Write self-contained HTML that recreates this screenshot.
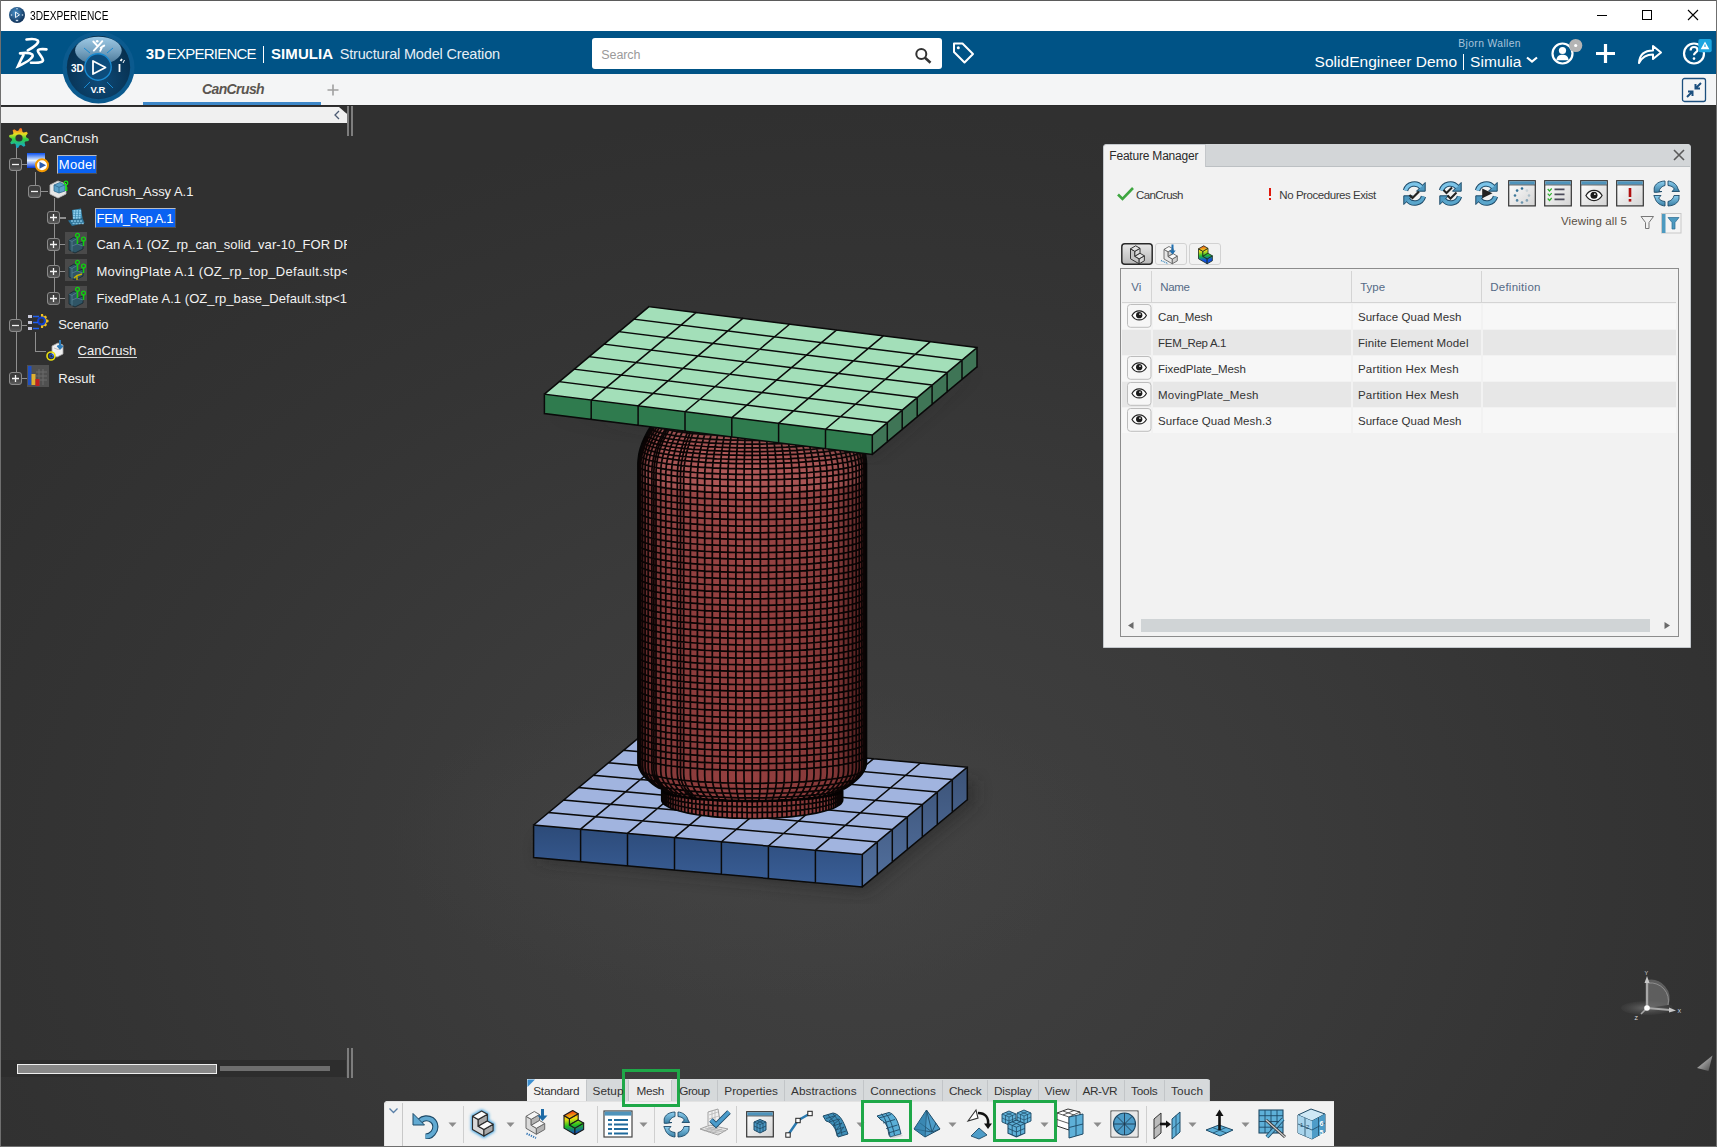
<!DOCTYPE html>
<html><head><meta charset="utf-8"><style>
html,body{margin:0;padding:0}
body{width:1717px;height:1147px;position:relative;overflow:hidden;background:#333333;font-family:"Liberation Sans",sans-serif}
.b{position:absolute;display:block}
.t{position:absolute;white-space:pre;line-height:1}
</style></head><body>
<div class="b" style="left:0px;top:0px;width:1717px;height:31px;background:#fff"></div>
<div class="b" style="left:0px;top:0px;width:1717px;height:1px;background:#5b5b5b"></div>
<div class="b" style="left:1px;top:31px;width:1715px;height:43px;background:#005386"></div>
<div class="b" style="left:1px;top:74px;width:1715px;height:31px;background:#f4f5f6"></div>
<div class="b" style="left:1px;top:105px;width:1715px;height:1px;background:#2a2a2a"></div>
<div class="b" style="left:1px;top:106px;width:1715px;height:1041px;background:radial-gradient(ellipse 1000px 760px at 860px 760px,#414141 0%,#3b3b3b 40%,#343434 75%,#303030 100%)"></div>
<svg class="b" style="left:0;top:0" width="1717" height="1147" viewBox="0 0 1717 1147">
<defs><radialGradient id="bgg" cx="0.5" cy="0.5" r="0.5"><stop offset="0" stop-color="#454545" stop-opacity="0.7"/><stop offset="1" stop-color="#454545" stop-opacity="0"/></radialGradient><linearGradient id="bpf" x1="0" x2="0" y1="0" y2="1"><stop offset="0" stop-color="#2c4a78"/><stop offset="1" stop-color="#3a5f98"/></linearGradient><linearGradient id="bpr" x1="0" x2="0" y1="0" y2="1"><stop offset="0" stop-color="#3c5378"/><stop offset="1" stop-color="#52709e"/></linearGradient><filter id="blur8"><feGaussianBlur stdDeviation="8"/></filter></defs>
<ellipse cx="750" cy="840" rx="360" ry="160" fill="url(#bgg)"/>
<polygon points="540,860 866,892 975,803 975,780 540,840" fill="#222" opacity="0.5" filter="url(#blur8)"/>
<polygon points="533.6,825.0 862.3,854.4 862.3,886.9 533.6,857.5" fill="url(#bpf)"/>
<polygon points="862.3,854.4 967.3,767.2 967.3,799.7 862.3,886.9" fill="url(#bpr)"/>
<polygon points="533.6,825.0 862.3,854.4 967.3,767.2 638.6,737.8" fill="#a1b4df"/>
<path d="M533.6 825.0L638.6 737.8M533.6 825.0L862.3 854.4M533.6 825.0L533.6 857.5M862.3 854.4L862.3 886.9M580.6 829.2L685.6 742.0M548.6 812.5L877.3 841.9M580.6 829.2L580.6 861.7M877.3 841.9L877.3 874.4M627.5 833.4L732.5 746.2M563.6 800.1L892.3 829.5M627.5 833.4L627.5 865.9M892.3 829.5L892.3 862.0M674.5 837.6L779.5 750.4M578.6 787.6L907.3 817.0M674.5 837.6L674.5 870.1M907.3 817.0L907.3 849.5M721.4 841.8L826.4 754.6M593.6 775.2L922.3 804.6M721.4 841.8L721.4 874.3M922.3 804.6L922.3 837.1M768.4 846.0L873.4 758.8M608.6 762.7L937.3 792.1M768.4 846.0L768.4 878.5M937.3 792.1L937.3 824.6M815.4 850.2L920.4 763.0M623.6 750.2L952.3 779.6M815.4 850.2L815.4 882.7M952.3 779.6L952.3 812.1M862.3 854.4L967.3 767.2M638.6 737.8L967.3 767.2M862.3 854.4L862.3 886.9M967.3 767.2L967.3 799.7M533.6 857.5L862.3 886.9L967.3 799.7" stroke="#0a0a0a" stroke-width="1.5" fill="none" stroke-linecap="square"/>
<defs><linearGradient id="cang" x1="0" x2="1" y1="0" y2="0"><stop offset="0" stop-color="#562222"/><stop offset="0.12" stop-color="#863a3a"/><stop offset="0.45" stop-color="#964040"/><stop offset="0.85" stop-color="#843838"/><stop offset="1" stop-color="#4a1c1c"/></linearGradient><clipPath id="canclip"><path d="M674.5 400.0 L671.2 403.0 L668.0 406.0 L665.0 409.0 L662.2 412.0 L659.5 415.0 L657.0 418.0 L654.7 421.0 L652.5 424.0 L650.4 427.0 L648.5 430.0 L646.8 433.0 L645.2 436.0 L643.8 439.0 L642.5 442.0 L641.4 445.0 L640.4 448.0 L639.6 451.0 L638.9 454.0 L638.5 457.0 L638.1 460.0 L637.9 463.0 L637.9 465.0 L637.9 485.0 L637.9 505.0 L637.9 525.0 L637.9 545.0 L637.9 565.0 L637.9 585.0 L637.9 605.0 L637.9 625.0 L637.9 645.0 L637.9 665.0 L637.9 685.0 L637.9 705.0 L637.9 725.0 L637.9 745.0 L637.9 762.0 L638.0 764.0 L638.2 765.0 L638.4 766.0 L639.0 768.0 L639.9 770.0 L641.0 772.0 L642.3 774.0 L643.9 776.0 L645.7 778.0 L647.8 780.0 L650.1 782.0 L652.7 784.0 L655.5 786.0 L658.6 788.0 L661.7 789.0 L661.7 800.0 L661.7 800.0 L661.9 801.2 L662.5 802.4 L663.4 803.6 L664.8 804.8 L666.5 805.9 L668.6 807.1 L671.0 808.2 L673.8 809.2 L677.0 810.3 L680.4 811.3 L684.2 812.2 L688.2 813.1 L692.5 813.9 L697.1 814.7 L701.9 815.4 L707.0 816.0 L712.2 816.6 L717.6 817.1 L723.1 817.5 L728.8 817.9 L734.5 818.1 L740.4 818.3 L746.3 818.5 L752.2 818.5 L758.1 818.5 L764.0 818.3 L769.9 818.1 L775.6 817.9 L781.3 817.5 L786.8 817.1 L792.2 816.6 L797.5 816.0 L802.5 815.4 L807.3 814.7 L811.9 813.9 L816.2 813.1 L820.2 812.2 L824.0 811.3 L827.4 810.3 L830.6 809.2 L833.4 808.2 L835.8 807.1 L837.9 805.9 L839.6 804.8 L841.0 803.6 L841.9 802.4 L842.5 801.2 L842.7 800.0 L842.7 789.0 L844.2 789.0 L845.8 788.0 L848.9 786.0 L851.7 784.0 L854.3 782.0 L856.6 780.0 L858.7 778.0 L860.5 776.0 L862.1 774.0 L863.4 772.0 L864.5 770.0 L865.4 768.0 L866.0 766.0 L866.2 765.0 L866.4 764.0 L866.5 762.0 L866.5 745.0 L866.5 725.0 L866.5 705.0 L866.5 685.0 L866.5 665.0 L866.5 645.0 L866.5 625.0 L866.5 605.0 L866.5 585.0 L866.5 565.0 L866.5 545.0 L866.5 525.0 L866.5 505.0 L866.5 485.0 L866.5 465.0 L866.5 463.0 L866.3 460.0 L865.9 457.0 L865.5 454.0 L864.8 451.0 L864.0 448.0 L863.0 445.0 L861.9 442.0 L860.6 439.0 L859.2 436.0 L857.6 433.0 L855.9 430.0 L854.0 427.0 L851.9 424.0 L849.7 421.0 L847.4 418.0 L844.9 415.0 L842.2 412.0 L839.4 409.0 L836.4 406.0 L833.2 403.0 L829.9 400.0 Z"/></clipPath></defs>
<path d="M674.5 400.0 L671.2 403.0 L668.0 406.0 L665.0 409.0 L662.2 412.0 L659.5 415.0 L657.0 418.0 L654.7 421.0 L652.5 424.0 L650.4 427.0 L648.5 430.0 L646.8 433.0 L645.2 436.0 L643.8 439.0 L642.5 442.0 L641.4 445.0 L640.4 448.0 L639.6 451.0 L638.9 454.0 L638.5 457.0 L638.1 460.0 L637.9 463.0 L637.9 465.0 L637.9 485.0 L637.9 505.0 L637.9 525.0 L637.9 545.0 L637.9 565.0 L637.9 585.0 L637.9 605.0 L637.9 625.0 L637.9 645.0 L637.9 665.0 L637.9 685.0 L637.9 705.0 L637.9 725.0 L637.9 745.0 L637.9 762.0 L638.0 764.0 L638.2 765.0 L638.4 766.0 L639.0 768.0 L639.9 770.0 L641.0 772.0 L642.3 774.0 L643.9 776.0 L645.7 778.0 L647.8 780.0 L650.1 782.0 L652.7 784.0 L655.5 786.0 L658.6 788.0 L661.7 789.0 L661.7 800.0 L661.7 800.0 L661.9 801.2 L662.5 802.4 L663.4 803.6 L664.8 804.8 L666.5 805.9 L668.6 807.1 L671.0 808.2 L673.8 809.2 L677.0 810.3 L680.4 811.3 L684.2 812.2 L688.2 813.1 L692.5 813.9 L697.1 814.7 L701.9 815.4 L707.0 816.0 L712.2 816.6 L717.6 817.1 L723.1 817.5 L728.8 817.9 L734.5 818.1 L740.4 818.3 L746.3 818.5 L752.2 818.5 L758.1 818.5 L764.0 818.3 L769.9 818.1 L775.6 817.9 L781.3 817.5 L786.8 817.1 L792.2 816.6 L797.5 816.0 L802.5 815.4 L807.3 814.7 L811.9 813.9 L816.2 813.1 L820.2 812.2 L824.0 811.3 L827.4 810.3 L830.6 809.2 L833.4 808.2 L835.8 807.1 L837.9 805.9 L839.6 804.8 L841.0 803.6 L841.9 802.4 L842.5 801.2 L842.7 800.0 L842.7 789.0 L844.2 789.0 L845.8 788.0 L848.9 786.0 L851.7 784.0 L854.3 782.0 L856.6 780.0 L858.7 778.0 L860.5 776.0 L862.1 774.0 L863.4 772.0 L864.5 770.0 L865.4 768.0 L866.0 766.0 L866.2 765.0 L866.4 764.0 L866.5 762.0 L866.5 745.0 L866.5 725.0 L866.5 705.0 L866.5 685.0 L866.5 665.0 L866.5 645.0 L866.5 625.0 L866.5 605.0 L866.5 585.0 L866.5 565.0 L866.5 545.0 L866.5 525.0 L866.5 505.0 L866.5 485.0 L866.5 465.0 L866.5 463.0 L866.3 460.0 L865.9 457.0 L865.5 454.0 L864.8 451.0 L864.0 448.0 L863.0 445.0 L861.9 442.0 L860.6 439.0 L859.2 436.0 L857.6 433.0 L855.9 430.0 L854.0 427.0 L851.9 424.0 L849.7 421.0 L847.4 418.0 L844.9 415.0 L842.2 412.0 L839.4 409.0 L836.4 406.0 L833.2 403.0 L829.9 400.0 Z" fill="url(#cang)"/>
<defs><linearGradient id="canv" gradientUnits="userSpaceOnUse" x1="0" y1="420" x2="0" y2="620"><stop offset="0" stop-color="#ff9a9a" stop-opacity="0.16"/><stop offset="1" stop-color="#ff9a9a" stop-opacity="0"/></linearGradient></defs>
<g clip-path="url(#canclip)"><rect x="630" y="400" width="245" height="230" fill="url(#canv)"/><path d="M674.5 400.0 L674.6 400.7 L675.1 401.3 L676.0 402.0 L677.1 402.6 L678.6 403.3 L680.4 403.9 L682.5 404.5 L684.9 405.1 L687.6 405.7 L690.5 406.2 L693.8 406.7 L697.2 407.2 L701.0 407.7 L704.9 408.1 L709.0 408.5 L713.3 408.8 L717.8 409.1 L722.5 409.4 L727.2 409.7 L732.1 409.9 L737.0 410.0 L742.1 410.1 L747.1 410.2 L752.2 410.2 L757.3 410.2 L762.3 410.1 L767.4 410.0 L772.3 409.9 L777.2 409.7 L781.9 409.4 L786.6 409.1 L791.1 408.8 L795.4 408.5 L799.5 408.1 L803.4 407.7 L807.2 407.2 L810.6 406.7 L813.9 406.2 L816.8 405.7 L819.5 405.1 L821.9 404.5 L824.0 403.9 L825.8 403.3 L827.3 402.6 L828.4 402.0 L829.3 401.3 L829.8 400.7 L829.9 400.0 L866.5 477.0 L866.3 478.0 L865.5 479.0 L864.3 479.9 L862.6 480.9 L860.4 481.8 L857.8 482.7 L854.7 483.6 L851.2 484.5 L847.2 485.3 L842.9 486.1 L838.1 486.9 L833.0 487.6 L827.6 488.3 L821.8 488.9 L815.7 489.5 L809.4 490.0 L802.8 490.5 L795.9 490.9 L788.9 491.2 L781.8 491.5 L774.5 491.7 L767.1 491.9 L759.7 492.0 L752.2 492.0 L744.7 492.0 L737.3 491.9 L729.9 491.7 L722.6 491.5 L715.5 491.2 L708.5 490.9 L701.6 490.5 L695.1 490.0 L688.7 489.5 L682.6 488.9 L676.8 488.3 L671.4 487.6 L666.3 486.9 L661.5 486.1 L657.2 485.3 L653.2 484.5 L649.7 483.6 L646.6 482.7 L644.0 481.8 L641.8 480.9 L640.1 479.9 L638.9 479.0 L638.1 478.0 L637.9 477.0Z" fill="#f09090" opacity="0.2"/>
<path d="M674.5 400.0L671.2 403.0L668.0 406.0L665.0 409.0L662.2 412.0L659.5 415.0L657.0 418.0L654.7 421.0L652.5 424.0L650.4 427.0L648.5 430.0L646.8 433.0L645.2 436.0L643.8 439.0L642.5 442.0L641.4 445.0L640.4 448.0L639.6 451.0L638.9 454.0L638.5 457.0L638.1 460.0L637.9 463.0L637.9 465.0L637.9 762.0L638.4 766.0L639.9 770.0L642.3 774.0L645.7 778.0L650.1 782.0L655.5 786.0L660.2 790.0M674.7 400.7L671.4 403.8L668.2 406.8L665.3 409.8L662.4 412.8L659.8 415.9L657.3 418.9L654.9 421.9L652.7 424.9L650.7 428.0L648.8 431.0L647.0 434.0L645.5 437.0L644.0 440.0L642.8 443.0L641.6 446.0L640.7 449.0L639.9 452.1L639.2 455.1L638.7 458.1L638.4 461.1L638.2 464.1L638.2 466.1L638.2 763.1L638.7 767.1L640.1 771.1L642.6 775.0L646.0 779.0L650.4 783.0L655.8 786.9L660.4 790.9M675.3 401.5L672.0 404.5L668.9 407.6L665.9 410.6L663.1 413.7L660.5 416.7L658.0 419.8L655.7 422.8L653.5 425.9L651.4 428.9L649.6 431.9L647.8 435.0L646.3 438.0L644.9 441.0L643.6 444.0L642.5 447.1L641.5 450.1L640.7 453.1L640.1 456.1L639.6 459.1L639.3 462.1L639.1 465.1L639.1 467.1L639.1 764.1L639.5 768.1L641.0 772.1L643.4 776.1L646.8 780.0L651.2 783.9L656.5 787.8L661.1 791.7M676.3 402.2L673.0 405.3L670.0 408.3L667.0 411.4L664.3 414.5L661.7 417.6L659.2 420.7L656.9 423.7L654.7 426.8L652.7 429.8L650.9 432.9L649.2 435.9L647.6 439.0L646.2 442.0L645.0 445.1L643.9 448.1L643.0 451.1L642.2 454.1L641.5 457.2L641.1 460.2L640.7 463.2L640.5 466.2L640.5 468.2L640.5 765.2L641.0 769.2L642.4 773.1L644.8 777.1L648.2 781.0L652.5 784.8L657.7 788.7L662.3 792.6M677.6 402.9L674.5 406.0L671.4 409.1L668.6 412.2L665.9 415.3L663.3 418.4L660.9 421.5L658.6 424.6L656.5 427.7L654.5 430.8L652.7 433.8L651.0 436.9L649.5 440.0L648.1 443.0L646.9 446.1L645.9 449.1L644.9 452.1L644.2 455.2L643.5 458.2L643.1 461.2L642.7 464.2L642.6 467.2L642.5 469.2L642.5 766.2L643.0 770.2L644.4 774.2L646.8 778.1L650.0 781.9L654.3 785.8L659.4 789.6L663.9 793.4M679.4 403.6L676.3 406.7L673.3 409.9L670.5 413.0L667.9 416.1L665.4 419.2L663.0 422.4L660.8 425.5L658.7 428.6L656.8 431.7L655.0 434.8L653.4 437.8L651.9 440.9L650.6 444.0L649.4 447.0L648.4 450.1L647.5 453.1L646.7 456.2L646.1 459.2L645.6 462.2L645.3 465.2L645.1 468.2L645.1 470.2L645.1 767.2L645.6 771.2L646.9 775.2L649.2 779.0L652.4 782.9L656.6 786.7L661.6 790.4L666.0 794.2M681.5 404.2L678.5 407.4L675.6 410.6L672.9 413.8L670.3 416.9L667.9 420.1L665.6 423.2L663.5 426.3L661.5 429.4L659.6 432.5L657.9 435.7L656.3 438.7L654.9 441.8L653.6 444.9L652.4 448.0L651.4 451.0L650.5 454.1L649.8 457.1L649.2 460.2L648.7 463.2L648.4 466.2L648.3 469.2L648.2 471.2L648.2 768.2L648.7 772.2L650.0 776.1L652.2 780.0L655.4 783.8L659.4 787.6L664.3 791.3L668.5 795.0M684.0 404.9L681.1 408.1L678.3 411.3L675.7 414.5L673.2 417.7L670.9 420.8L668.7 424.0L666.6 427.1L664.7 430.3L662.9 433.4L661.2 436.5L659.7 439.6L658.3 442.7L657.0 445.8L655.9 448.9L654.9 452.0L654.1 455.0L653.4 458.1L652.8 461.1L652.4 464.2L652.1 467.2L651.9 470.2L651.9 472.2L651.9 769.2L652.3 773.2L653.6 777.1L655.7 780.9L658.8 784.7L662.6 788.4L667.3 792.1L671.5 795.8M686.8 405.5L684.0 408.7L681.4 412.0L678.9 415.2L676.5 418.4L674.3 421.6L672.1 424.8L670.1 427.9L668.3 431.1L666.6 434.2L665.0 437.4L663.5 440.5L662.2 443.6L661.0 446.7L659.9 449.8L659.0 452.9L658.1 455.9L657.5 459.0L656.9 462.0L656.5 465.1L656.2 468.1L656.1 471.1L656.0 473.1L656.0 770.1L656.5 774.1L657.7 778.0L659.8 781.8L662.6 785.6L666.3 789.2L670.9 792.9L674.8 796.5M690.0 406.1L687.3 409.4L684.8 412.6L682.4 415.9L680.2 419.1L678.0 422.3L676.0 425.5L674.1 428.7L672.3 431.8L670.7 435.0L669.2 438.2L667.8 441.3L666.5 444.4L665.4 447.5L664.4 450.6L663.5 453.7L662.7 456.8L662.1 459.9L661.5 462.9L661.1 465.9L660.9 469.0L660.7 472.0L660.7 474.0L660.7 771.0L661.1 775.0L662.3 778.8L664.2 782.6L667.0 786.4L670.5 790.0L674.8 793.6L678.6 797.2M693.5 406.7L691.0 410.0L688.6 413.2L686.3 416.5L684.2 419.7L682.2 423.0L680.3 426.2L678.5 429.4L676.8 432.6L675.3 435.7L673.8 438.9L672.5 442.1L671.3 445.2L670.2 448.3L669.3 451.4L668.4 454.5L667.7 457.6L667.1 460.7L666.6 463.7L666.2 466.8L666.0 469.8L665.8 472.8L665.8 474.8L665.8 771.8L666.2 775.8L667.3 779.7L669.1 783.4L671.7 787.1L675.1 790.8L679.1 794.3L682.7 797.9M697.2 407.2L694.9 410.5L692.7 413.8L690.6 417.1L688.6 420.4L686.7 423.6L684.9 426.8L683.2 430.1L681.7 433.3L680.2 436.4L678.9 439.6L677.6 442.8L676.5 445.9L675.5 449.1L674.6 452.2L673.8 455.3L673.1 458.4L672.6 461.4L672.1 464.5L671.8 467.6L671.5 470.6L671.4 473.6L671.4 475.6L671.4 772.6L671.7 776.6L672.8 780.4L674.5 784.2L676.9 787.9L680.0 791.5L683.8 795.0L687.1 798.5M701.3 407.7L699.1 411.0L697.1 414.3L695.1 417.6L693.3 420.9L691.5 424.2L689.9 427.4L688.3 430.7L686.9 433.9L685.5 437.1L684.3 440.3L683.2 443.5L682.1 446.6L681.2 449.8L680.3 452.9L679.6 456.0L679.0 459.1L678.5 462.2L678.0 465.2L677.7 468.3L677.5 471.3L677.4 474.3L677.3 476.3L677.3 773.3L677.7 777.3L678.6 781.1L680.2 784.9L682.5 788.6L685.4 792.1L688.9 795.6L692.0 799.1M705.6 408.2L703.6 411.5L701.8 414.8L700.0 418.2L698.3 421.5L696.7 424.7L695.2 428.0L693.7 431.2L692.4 434.5L691.2 437.7L690.1 440.9L689.0 444.1L688.1 447.2L687.2 450.4L686.4 453.5L685.8 456.6L685.2 459.7L684.7 462.8L684.3 465.9L684.0 468.9L683.8 472.0L683.7 475.0L683.7 477.0L683.7 774.0L684.0 778.0L684.9 781.8L686.3 785.5L688.4 789.2L691.0 792.7L694.3 796.2L697.1 799.7M710.2 408.6L708.4 411.9L706.7 415.3L705.1 418.6L703.6 421.9L702.1 425.2L700.7 428.5L699.5 431.8L698.3 435.0L697.2 438.2L696.1 441.4L695.2 444.6L694.3 447.8L693.6 451.0L692.9 454.1L692.3 457.2L691.8 460.3L691.3 463.4L691.0 466.5L690.7 469.6L690.5 472.6L690.4 475.6L690.4 477.6L690.4 774.6L690.7 778.6L691.5 782.4L692.8 786.1L694.6 789.8L697.0 793.3L699.9 796.7L702.5 800.2M714.9 409.0L713.4 412.3L711.9 415.7L710.4 419.0L709.1 422.4L707.8 425.7L706.6 429.0L705.5 432.2L704.4 435.5L703.4 438.7L702.5 441.9L701.7 445.1L700.9 448.3L700.2 451.5L699.6 454.6L699.1 457.8L698.6 460.9L698.2 464.0L697.9 467.0L697.7 470.1L697.5 473.1L697.4 476.2L697.4 478.2L697.4 775.2L697.7 779.1L698.4 782.9L699.5 786.7L701.2 790.3L703.3 793.8L705.9 797.1L708.1 800.6M719.9 409.3L718.5 412.7L717.2 416.0L716.0 419.4L714.8 422.7L713.7 426.1L712.7 429.4L711.7 432.6L710.8 435.9L709.9 439.2L709.1 442.4L708.4 445.6L707.7 448.8L707.1 451.9L706.6 455.1L706.2 458.2L705.8 461.3L705.4 464.4L705.2 467.5L704.9 470.6L704.8 473.6L704.7 476.6L704.7 478.6L704.7 775.6L704.9 779.6L705.5 783.4L706.5 787.1L708.0 790.7L709.8 794.2L712.0 797.5L714.0 801.0M725.0 409.6L723.9 413.0L722.8 416.3L721.7 419.7L720.8 423.1L719.8 426.4L718.9 429.7L718.1 433.0L717.3 436.3L716.6 439.5L716.0 442.8L715.4 446.0L714.8 449.2L714.3 452.3L713.9 455.5L713.5 458.6L713.1 461.7L712.8 464.8L712.6 467.9L712.4 471.0L712.3 474.0L712.3 477.0L712.3 479.1L712.3 776.1L712.4 780.0L712.9 783.8L713.8 787.5L715.0 791.1L716.5 794.5L718.4 797.9L720.0 801.3M730.3 409.8L729.4 413.2L728.5 416.6L727.6 420.0L726.8 423.3L726.1 426.7L725.4 430.0L724.7 433.3L724.1 436.6L723.5 439.8L723.0 443.1L722.5 446.3L722.0 449.5L721.6 452.7L721.3 455.8L721.0 459.0L720.7 462.1L720.5 465.2L720.3 468.3L720.2 471.3L720.1 474.4L720.0 477.4L720.0 479.4L720.0 776.4L720.1 780.3L720.5 784.1L721.2 787.8L722.2 791.4L723.4 794.9L725.0 798.2L726.3 801.6M735.7 410.0L735.0 413.4L734.3 416.8L733.7 420.2L733.1 423.5L732.5 426.9L732.0 430.2L731.5 433.5L731.0 436.8L730.6 440.1L730.2 443.3L729.8 446.5L729.5 449.7L729.1 452.9L728.9 456.1L728.6 459.2L728.4 462.3L728.3 465.4L728.1 468.5L728.0 471.6L727.9 474.6L727.9 477.7L727.9 479.7L727.9 776.7L728.0 780.6L728.3 784.4L728.8 788.1L729.6 791.7L730.5 795.1L731.6 798.4L732.6 801.8M741.1 410.1L740.7 413.5L740.2 416.9L739.8 420.3L739.4 423.7L739.0 427.0L738.7 430.4L738.3 433.7L738.0 437.0L737.7 440.2L737.4 443.5L737.2 446.7L737.0 449.9L736.8 453.1L736.6 456.3L736.4 459.4L736.3 462.5L736.2 465.6L736.1 468.7L736.0 471.8L736.0 474.8L735.9 477.8L735.9 479.8L735.9 776.8L736.0 780.8L736.2 784.6L736.6 788.3L737.0 791.8L737.7 795.3L738.4 798.6L739.1 802.0M746.7 410.2L746.4 413.6L746.2 417.0L746.0 420.4L745.8 423.8L745.6 427.1L745.4 430.5L745.2 433.8L745.1 437.1L744.9 440.3L744.8 443.6L744.7 446.8L744.6 450.0L744.5 453.2L744.4 456.4L744.3 459.5L744.2 462.6L744.2 465.7L744.1 468.8L744.1 471.9L744.1 474.9L744.0 478.0L744.0 480.0L744.0 777.0L744.1 780.9L744.2 784.7L744.4 788.4L744.6 791.9L744.9 795.4L745.3 798.7L745.6 802.0M752.2 410.2L752.2 413.6L752.2 417.0L752.2 420.4L752.2 423.8L752.2 427.2L752.2 430.5L752.2 433.8L752.2 437.1L752.2 440.4L752.2 443.6L752.2 446.8L752.2 450.0L752.2 453.2L752.2 456.4L752.2 459.5L752.2 462.7L752.2 465.8L752.2 468.9L752.2 471.9L752.2 475.0L752.2 478.0L752.2 480.0L752.2 777.0L752.2 780.9L752.2 784.7L752.2 788.4L752.2 792.0L752.2 795.4L752.2 798.7L752.2 802.1M757.7 410.2L758.0 413.6L758.2 417.0L758.4 420.4L758.6 423.8L758.8 427.1L759.0 430.5L759.2 433.8L759.3 437.1L759.5 440.3L759.6 443.6L759.7 446.8L759.8 450.0L759.9 453.2L760.0 456.4L760.1 459.5L760.2 462.6L760.2 465.7L760.3 468.8L760.3 471.9L760.3 474.9L760.4 478.0L760.4 480.0L760.4 777.0L760.3 780.9L760.2 784.7L760.0 788.4L759.8 791.9L759.5 795.4L759.1 798.7L758.8 802.0M763.3 410.1L763.7 413.5L764.2 416.9L764.6 420.3L765.0 423.7L765.4 427.0L765.7 430.4L766.1 433.7L766.4 437.0L766.7 440.2L767.0 443.5L767.2 446.7L767.4 449.9L767.6 453.1L767.8 456.3L768.0 459.4L768.1 462.5L768.2 465.6L768.3 468.7L768.4 471.8L768.4 474.8L768.5 477.8L768.5 479.8L768.5 776.8L768.4 780.8L768.2 784.6L767.8 788.3L767.4 791.8L766.7 795.3L766.0 798.6L765.3 802.0M768.7 410.0L769.4 413.4L770.1 416.8L770.7 420.2L771.3 423.5L771.9 426.9L772.4 430.2L772.9 433.5L773.4 436.8L773.8 440.1L774.2 443.3L774.6 446.5L774.9 449.7L775.3 452.9L775.5 456.1L775.8 459.2L776.0 462.3L776.1 465.4L776.3 468.5L776.4 471.6L776.5 474.6L776.5 477.7L776.5 479.7L776.5 776.7L776.4 780.6L776.1 784.4L775.6 788.1L774.8 791.7L773.9 795.1L772.8 798.4L771.8 801.8M774.1 409.8L775.0 413.2L775.9 416.6L776.8 420.0L777.6 423.3L778.3 426.7L779.0 430.0L779.7 433.3L780.3 436.6L780.9 439.8L781.4 443.1L781.9 446.3L782.4 449.5L782.8 452.7L783.1 455.8L783.4 459.0L783.7 462.1L783.9 465.2L784.1 468.3L784.2 471.3L784.3 474.4L784.4 477.4L784.4 479.4L784.4 776.4L784.3 780.3L783.9 784.1L783.2 787.8L782.2 791.4L781.0 794.9L779.4 798.2L778.1 801.6M779.4 409.6L780.5 413.0L781.6 416.3L782.7 419.7L783.6 423.1L784.6 426.4L785.5 429.7L786.3 433.0L787.1 436.3L787.8 439.5L788.4 442.8L789.0 446.0L789.6 449.2L790.1 452.3L790.5 455.5L790.9 458.6L791.3 461.7L791.6 464.8L791.8 467.9L792.0 471.0L792.1 474.0L792.1 477.0L792.1 479.1L792.1 776.1L792.0 780.0L791.5 783.8L790.6 787.5L789.4 791.1L787.9 794.5L786.0 797.9L784.4 801.3M784.5 409.3L785.9 412.7L787.2 416.0L788.4 419.4L789.6 422.7L790.7 426.1L791.7 429.4L792.7 432.6L793.6 435.9L794.5 439.2L795.3 442.4L796.0 445.6L796.7 448.8L797.3 451.9L797.8 455.1L798.2 458.2L798.6 461.3L799.0 464.4L799.2 467.5L799.5 470.6L799.6 473.6L799.7 476.6L799.7 478.6L799.7 775.6L799.5 779.6L798.9 783.4L797.9 787.1L796.4 790.7L794.6 794.2L792.4 797.5L790.4 801.0M789.5 409.0L791.0 412.3L792.5 415.7L794.0 419.0L795.3 422.4L796.6 425.7L797.8 429.0L798.9 432.2L800.0 435.5L801.0 438.7L801.9 441.9L802.7 445.1L803.5 448.3L804.2 451.5L804.8 454.6L805.3 457.8L805.8 460.9L806.2 464.0L806.5 467.0L806.7 470.1L806.9 473.1L807.0 476.2L807.0 478.2L807.0 775.2L806.7 779.1L806.0 782.9L804.9 786.7L803.2 790.3L801.1 793.8L798.5 797.1L796.3 800.6M794.2 408.6L796.0 411.9L797.7 415.3L799.3 418.6L800.8 421.9L802.3 425.2L803.7 428.5L804.9 431.8L806.1 435.0L807.2 438.2L808.3 441.4L809.2 444.6L810.1 447.8L810.8 451.0L811.5 454.1L812.1 457.2L812.6 460.3L813.1 463.4L813.4 466.5L813.7 469.6L813.9 472.6L814.0 475.6L814.0 477.6L814.0 774.6L813.7 778.6L812.9 782.4L811.6 786.1L809.8 789.8L807.4 793.3L804.5 796.7L801.9 800.2M798.8 408.2L800.8 411.5L802.6 414.8L804.4 418.2L806.1 421.5L807.7 424.7L809.2 428.0L810.7 431.2L812.0 434.5L813.2 437.7L814.3 440.9L815.4 444.1L816.3 447.2L817.2 450.4L818.0 453.5L818.6 456.6L819.2 459.7L819.7 462.8L820.1 465.9L820.4 468.9L820.6 472.0L820.7 475.0L820.7 477.0L820.7 774.0L820.4 778.0L819.5 781.8L818.1 785.5L816.0 789.2L813.4 792.7L810.1 796.2L807.3 799.7M803.1 407.7L805.3 411.0L807.3 414.3L809.3 417.6L811.1 420.9L812.9 424.2L814.5 427.4L816.1 430.7L817.5 433.9L818.9 437.1L820.1 440.3L821.2 443.5L822.3 446.6L823.2 449.8L824.1 452.9L824.8 456.0L825.4 459.1L825.9 462.2L826.4 465.2L826.7 468.3L826.9 471.3L827.0 474.3L827.1 476.3L827.1 773.3L826.7 777.3L825.8 781.1L824.2 784.9L821.9 788.6L819.0 792.1L815.5 795.6L812.4 799.1M807.2 407.2L809.5 410.5L811.7 413.8L813.8 417.1L815.8 420.4L817.7 423.6L819.5 426.8L821.2 430.1L822.7 433.3L824.2 436.4L825.5 439.6L826.8 442.8L827.9 445.9L828.9 449.1L829.8 452.2L830.6 455.3L831.3 458.4L831.8 461.4L832.3 464.5L832.6 467.6L832.9 470.6L833.0 473.6L833.0 475.6L833.0 772.6L832.7 776.6L831.6 780.4L829.9 784.2L827.5 787.9L824.4 791.5L820.6 795.0L817.3 798.5M810.9 406.7L813.4 410.0L815.8 413.2L818.1 416.5L820.2 419.7L822.2 423.0L824.1 426.2L825.9 429.4L827.6 432.6L829.1 435.7L830.6 438.9L831.9 442.1L833.1 445.2L834.2 448.3L835.1 451.4L836.0 454.5L836.7 457.6L837.3 460.7L837.8 463.7L838.2 466.8L838.4 469.8L838.6 472.8L838.6 474.8L838.6 771.8L838.2 775.8L837.1 779.7L835.3 783.4L832.7 787.1L829.3 790.8L825.3 794.3L821.7 797.9M814.4 406.1L817.1 409.4L819.6 412.6L822.0 415.9L824.2 419.1L826.4 422.3L828.4 425.5L830.3 428.7L832.1 431.8L833.7 435.0L835.2 438.2L836.6 441.3L837.9 444.4L839.0 447.5L840.0 450.6L840.9 453.7L841.7 456.8L842.3 459.9L842.9 462.9L843.3 465.9L843.5 469.0L843.7 472.0L843.7 474.0L843.7 771.0L843.3 775.0L842.1 778.8L840.2 782.6L837.4 786.4L833.9 790.0L829.6 793.6L825.8 797.2M817.6 405.5L820.4 408.7L823.0 412.0L825.5 415.2L827.9 418.4L830.1 421.6L832.3 424.8L834.3 427.9L836.1 431.1L837.8 434.2L839.4 437.4L840.9 440.5L842.2 443.6L843.4 446.7L844.5 449.8L845.4 452.9L846.3 455.9L846.9 459.0L847.5 462.0L847.9 465.1L848.2 468.1L848.3 471.1L848.4 473.1L848.4 770.1L847.9 774.1L846.7 778.0L844.6 781.8L841.8 785.6L838.1 789.2L833.5 792.9L829.6 796.5M820.4 404.9L823.3 408.1L826.1 411.3L828.7 414.5L831.2 417.7L833.5 420.8L835.7 424.0L837.8 427.1L839.7 430.3L841.5 433.4L843.2 436.5L844.7 439.6L846.1 442.7L847.4 445.8L848.5 448.9L849.5 452.0L850.3 455.0L851.0 458.1L851.6 461.1L852.0 464.2L852.3 467.2L852.5 470.2L852.5 472.2L852.5 769.2L852.1 773.2L850.8 777.1L848.7 780.9L845.6 784.7L841.8 788.4L837.1 792.1L832.9 795.8M822.9 404.2L825.9 407.4L828.8 410.6L831.5 413.8L834.1 416.9L836.5 420.1L838.8 423.2L840.9 426.3L842.9 429.4L844.8 432.5L846.5 435.7L848.1 438.7L849.5 441.8L850.8 444.9L852.0 448.0L853.0 451.0L853.9 454.1L854.6 457.1L855.2 460.2L855.7 463.2L856.0 466.2L856.1 469.2L856.2 471.2L856.2 768.2L855.7 772.2L854.4 776.1L852.2 780.0L849.0 783.8L845.0 787.6L840.1 791.3L835.9 795.0M825.0 403.6L828.1 406.7L831.1 409.9L833.9 413.0L836.5 416.1L839.0 419.2L841.4 422.4L843.6 425.5L845.7 428.6L847.6 431.7L849.4 434.8L851.0 437.8L852.5 440.9L853.8 444.0L855.0 447.0L856.0 450.1L856.9 453.1L857.7 456.2L858.3 459.2L858.8 462.2L859.1 465.2L859.3 468.2L859.3 470.2L859.3 767.2L858.8 771.2L857.5 775.2L855.2 779.0L852.0 782.9L847.8 786.7L842.8 790.4L838.4 794.2M826.8 402.9L829.9 406.0L833.0 409.1L835.8 412.2L838.5 415.3L841.1 418.4L843.5 421.5L845.8 424.6L847.9 427.7L849.9 430.8L851.7 433.8L853.4 436.9L854.9 440.0L856.3 443.0L857.5 446.1L858.5 449.1L859.5 452.1L860.2 455.2L860.9 458.2L861.3 461.2L861.7 464.2L861.8 467.2L861.9 469.2L861.9 766.2L861.4 770.2L860.0 774.2L857.6 778.1L854.4 781.9L850.1 785.8L845.0 789.6L840.5 793.4M828.1 402.2L831.4 405.3L834.4 408.3L837.4 411.4L840.1 414.5L842.7 417.6L845.2 420.7L847.5 423.7L849.7 426.8L851.7 429.8L853.5 432.9L855.2 435.9L856.8 439.0L858.2 442.0L859.4 445.1L860.5 448.1L861.4 451.1L862.2 454.1L862.9 457.2L863.3 460.2L863.7 463.2L863.9 466.2L863.9 468.2L863.9 765.2L863.4 769.2L862.0 773.1L859.6 777.1L856.2 781.0L851.9 784.8L846.7 788.7L842.1 792.6M829.1 401.5L832.4 404.5L835.5 407.6L838.5 410.6L841.3 413.7L843.9 416.7L846.4 419.8L848.7 422.8L850.9 425.9L853.0 428.9L854.8 431.9L856.6 435.0L858.1 438.0L859.5 441.0L860.8 444.0L861.9 447.1L862.9 450.1L863.7 453.1L864.3 456.1L864.8 459.1L865.1 462.1L865.3 465.1L865.3 467.1L865.3 764.1L864.9 768.1L863.4 772.1L861.0 776.1L857.6 780.0L853.2 783.9L847.9 787.8L843.3 791.7M829.7 400.7L833.0 403.8L836.2 406.8L839.1 409.8L842.0 412.8L844.6 415.9L847.1 418.9L849.5 421.9L851.7 424.9L853.7 428.0L855.6 431.0L857.4 434.0L858.9 437.0L860.4 440.0L861.6 443.0L862.8 446.0L863.7 449.0L864.5 452.1L865.2 455.1L865.7 458.1L866.0 461.1L866.2 464.1L866.2 466.1L866.2 763.1L865.7 767.1L864.3 771.1L861.8 775.0L858.4 779.0L854.0 783.0L848.6 786.9L844.0 790.9M829.9 400.0L833.2 403.0L836.4 406.0L839.4 409.0L842.2 412.0L844.9 415.0L847.4 418.0L849.7 421.0L851.9 424.0L854.0 427.0L855.9 430.0L857.6 433.0L859.2 436.0L860.6 439.0L861.9 442.0L863.0 445.0L864.0 448.0L864.8 451.0L865.5 454.0L865.9 457.0L866.3 460.0L866.5 463.0L866.5 465.0L866.5 762.0L866.0 766.0L864.5 770.0L862.1 774.0L858.7 778.0L854.3 782.0L848.9 786.0L844.2 790.0M685.4 405.2L682.5 408.4L679.8 411.6L677.2 414.8L674.8 418.0L672.5 421.2L670.3 424.4L668.3 427.5L666.4 430.7L664.7 433.8L663.0 436.9L661.5 440.1L660.2 443.2L658.9 446.3L657.8 449.3L656.9 452.4L656.1 455.5L655.4 458.5L654.8 461.6L654.4 464.6L654.1 467.6L653.9 470.7L653.9 472.7L653.9 769.7L654.3 773.6L655.6 777.5L657.7 781.4L660.6 785.1L664.4 788.8L669.1 792.5L673.1 796.2M703.4 407.9L701.4 411.3L699.4 414.6L697.5 417.9L695.7 421.2L694.1 424.5L692.5 427.7L691.0 431.0L689.6 434.2L688.3 437.4L687.1 440.6L686.0 443.8L685.0 446.9L684.2 450.1L683.4 453.2L682.7 456.3L682.1 459.4L681.5 462.5L681.1 465.6L680.8 468.6L680.6 471.7L680.5 474.7L680.5 476.7L680.5 773.7L680.8 777.6L681.7 781.5L683.2 785.2L685.4 788.9L688.2 792.4L691.5 795.9L694.5 799.4M667.0 407.0L667.2 407.7L667.7 408.5L668.7 409.2L669.9 409.9L671.5 410.6L673.5 411.3L675.8 411.9L678.4 412.6L681.4 413.2L684.6 413.8L688.2 414.4L692.0 414.9L696.0 415.4L700.3 415.9L704.9 416.3L709.6 416.7L714.5 417.0L719.6 417.3L724.8 417.6L730.2 417.8L735.6 418.0L741.1 418.1L746.6 418.2L752.2 418.2L757.8 418.2L763.3 418.1L768.8 418.0L774.2 417.8L779.6 417.6L784.8 417.3L789.9 417.0L794.8 416.7L799.5 416.3L804.1 415.9L808.4 415.4L812.4 414.9L816.2 414.4L819.8 413.8L823.0 413.2L826.0 412.6L828.6 411.9L830.9 411.3L832.9 410.6L834.5 409.9L835.7 409.2L836.7 408.5L837.2 407.7L837.4 407.0M663.1 411.0L663.3 411.8L663.9 412.5L664.9 413.3L666.2 414.0L667.9 414.8L669.9 415.5L672.3 416.2L675.1 416.8L678.2 417.5L681.5 418.1L685.2 418.7L689.2 419.3L693.5 419.8L698.0 420.3L702.7 420.7L707.7 421.1L712.8 421.5L718.1 421.8L723.6 422.1L729.2 422.3L734.8 422.5L740.6 422.6L746.4 422.7L752.2 422.7L758.0 422.7L763.8 422.6L769.6 422.5L775.2 422.3L780.8 422.1L786.3 421.8L791.6 421.5L796.7 421.1L801.7 420.7L806.4 420.3L810.9 419.8L815.2 419.3L819.2 418.7L822.9 418.1L826.2 417.5L829.3 416.8L832.1 416.2L834.5 415.5L836.5 414.8L838.2 414.0L839.5 413.3L840.5 412.5L841.1 411.8L841.3 411.0M659.5 415.0L659.7 415.8L660.3 416.6L661.3 417.4L662.7 418.1L664.5 418.9L666.6 419.7L669.1 420.4L672.0 421.1L675.2 421.8L678.7 422.4L682.5 423.0L686.7 423.6L691.1 424.1L695.8 424.6L700.7 425.1L705.9 425.5L711.2 425.9L716.7 426.2L722.4 426.5L728.2 426.7L734.1 426.9L740.1 427.1L746.1 427.1L752.2 427.2L758.3 427.1L764.3 427.1L770.3 426.9L776.2 426.7L782.0 426.5L787.7 426.2L793.2 425.9L798.5 425.5L803.7 425.1L808.6 424.6L813.3 424.1L817.7 423.6L821.9 423.0L825.7 422.4L829.2 421.8L832.4 421.1L835.3 420.4L837.8 419.7L839.9 418.9L841.7 418.1L843.1 417.4L844.1 416.6L844.7 415.8L844.9 415.0M656.2 419.0L656.4 419.8L657.0 420.6L658.1 421.5L659.5 422.3L661.3 423.0L663.5 423.8L666.1 424.6L669.1 425.3L672.4 426.0L676.1 426.7L680.0 427.3L684.3 427.9L688.9 428.5L693.8 429.0L698.9 429.5L704.2 429.9L709.7 430.3L715.5 430.6L721.3 430.9L727.4 431.2L733.5 431.4L739.7 431.5L745.9 431.6L752.2 431.6L758.5 431.6L764.7 431.5L770.9 431.4L777.0 431.2L783.1 430.9L788.9 430.6L794.7 430.3L800.2 429.9L805.5 429.5L810.6 429.0L815.5 428.5L820.1 427.9L824.4 427.3L828.3 426.7L832.0 426.0L835.3 425.3L838.3 424.6L840.9 423.8L843.1 423.0L844.9 422.3L846.3 421.5L847.4 420.6L848.0 419.8L848.2 419.0M653.2 423.0L653.4 423.8L654.0 424.7L655.1 425.5L656.5 426.4L658.4 427.2L660.7 428.0L663.4 428.7L666.4 429.5L669.9 430.2L673.6 430.9L677.7 431.6L682.2 432.2L686.9 432.8L691.9 433.3L697.2 433.8L702.7 434.3L708.4 434.7L714.3 435.0L720.4 435.3L726.6 435.6L732.9 435.7L739.3 435.9L745.7 436.0L752.2 436.0L758.7 436.0L765.1 435.9L771.5 435.7L777.8 435.6L784.0 435.3L790.1 435.0L796.0 434.7L801.7 434.3L807.2 433.8L812.5 433.3L817.5 432.8L822.2 432.2L826.7 431.6L830.8 430.9L834.5 430.2L838.0 429.5L841.0 428.7L843.7 428.0L846.0 427.2L847.9 426.4L849.3 425.5L850.4 424.7L851.0 423.8L851.2 423.0M650.4 427.0L650.6 427.9L651.3 428.7L652.4 429.6L653.9 430.5L655.8 431.3L658.1 432.1L660.9 432.9L664.0 433.7L667.6 434.4L671.4 435.1L675.7 435.8L680.2 436.4L685.1 437.0L690.2 437.6L695.6 438.1L701.3 438.6L707.2 439.0L713.2 439.3L719.5 439.7L725.9 439.9L732.3 440.1L738.9 440.2L745.5 440.3L752.2 440.4L758.9 440.3L765.5 440.2L772.1 440.1L778.5 439.9L784.9 439.7L791.2 439.3L797.2 439.0L803.1 438.6L808.8 438.1L814.2 437.6L819.3 437.0L824.2 436.4L828.7 435.8L833.0 435.1L836.8 434.4L840.4 433.7L843.5 432.9L846.3 432.1L848.6 431.3L850.5 430.5L852.0 429.6L853.1 428.7L853.8 427.9L854.0 427.0M648.2 430.5L648.4 431.4L649.1 432.3L650.2 433.2L651.7 434.0L653.7 434.9L656.1 435.7L658.9 436.5L662.1 437.3L665.7 438.1L669.7 438.8L674.0 439.5L678.7 440.2L683.6 440.8L688.9 441.3L694.4 441.8L700.2 442.3L706.2 442.7L712.4 443.1L718.8 443.4L725.3 443.7L731.9 443.9L738.6 444.0L745.4 444.1L752.2 444.1L759.0 444.1L765.8 444.0L772.5 443.9L779.1 443.7L785.6 443.4L792.0 443.1L798.2 442.7L804.2 442.3L810.0 441.8L815.5 441.3L820.8 440.8L825.7 440.2L830.4 439.5L834.7 438.8L838.7 438.1L842.3 437.3L845.5 436.5L848.3 435.7L850.7 434.9L852.7 434.0L854.2 433.2L855.3 432.3L856.0 431.4L856.2 430.5M646.2 434.0L646.4 434.9L647.1 435.8L648.3 436.7L649.8 437.6L651.8 438.5L654.3 439.3L657.1 440.2L660.4 441.0L664.1 441.7L668.1 442.5L672.5 443.2L677.3 443.8L682.3 444.5L687.7 445.0L693.3 445.6L699.2 446.0L705.3 446.5L711.6 446.8L718.1 447.2L724.8 447.4L731.5 447.6L738.4 447.8L745.3 447.9L752.2 447.9L759.1 447.9L766.0 447.8L772.9 447.6L779.6 447.4L786.3 447.2L792.8 446.8L799.1 446.5L805.2 446.0L811.1 445.6L816.7 445.0L822.1 444.5L827.1 443.8L831.9 443.2L836.3 442.5L840.3 441.7L844.0 441.0L847.3 440.2L850.1 439.3L852.6 438.5L854.6 437.6L856.1 436.7L857.3 435.8L858.0 434.9L858.2 434.0M644.4 437.5L644.7 438.4L645.4 439.3L646.5 440.3L648.1 441.2L650.2 442.0L652.6 442.9L655.6 443.8L658.9 444.6L662.6 445.4L666.7 446.1L671.2 446.8L676.0 447.5L681.2 448.1L686.6 448.7L692.3 449.3L698.3 449.7L704.5 450.2L711.0 450.6L717.6 450.9L724.3 451.2L731.2 451.4L738.1 451.5L745.2 451.6L752.2 451.6L759.2 451.6L766.3 451.5L773.2 451.4L780.1 451.2L786.8 450.9L793.4 450.6L799.9 450.2L806.1 449.7L812.1 449.3L817.8 448.7L823.2 448.1L828.4 447.5L833.2 446.8L837.7 446.1L841.8 445.4L845.5 444.6L848.8 443.8L851.8 442.9L854.2 442.0L856.3 441.2L857.9 440.3L859.0 439.3L859.7 438.4L860.0 437.5M642.9 441.0L643.1 441.9L643.8 442.9L645.0 443.8L646.6 444.7L648.7 445.6L651.2 446.5L654.2 447.3L657.5 448.2L661.3 449.0L665.5 449.7L670.0 450.5L674.9 451.1L680.1 451.8L685.7 452.4L691.5 452.9L697.5 453.4L703.9 453.9L710.4 454.3L717.1 454.6L723.9 454.9L730.9 455.1L737.9 455.2L745.1 455.3L752.2 455.3L759.3 455.3L766.5 455.2L773.5 455.1L780.5 454.9L787.3 454.6L794.0 454.3L800.5 453.9L806.9 453.4L812.9 452.9L818.7 452.4L824.3 451.8L829.5 451.1L834.4 450.5L838.9 449.7L843.1 449.0L846.9 448.2L850.2 447.3L853.2 446.5L855.7 445.6L857.8 444.7L859.4 443.8L860.6 442.9L861.3 441.9L861.5 441.0M641.4 445.0L641.6 446.0L642.3 446.9L643.5 447.8L645.1 448.8L647.2 449.7L649.8 450.6L652.8 451.4L656.2 452.3L660.0 453.1L664.3 453.9L668.9 454.6L673.8 455.3L679.1 455.9L684.7 456.5L690.6 457.1L696.8 457.6L703.2 458.0L709.8 458.4L716.6 458.8L723.5 459.0L730.6 459.3L737.7 459.4L745.0 459.5L752.2 459.5L759.4 459.5L766.7 459.4L773.8 459.3L780.9 459.0L787.8 458.8L794.6 458.4L801.2 458.0L807.6 457.6L813.8 457.1L819.7 456.5L825.3 455.9L830.6 455.3L835.5 454.6L840.1 453.9L844.4 453.1L848.2 452.3L851.6 451.4L854.6 450.6L857.2 449.7L859.3 448.8L860.9 447.8L862.1 446.9L862.8 446.0L863.0 445.0M640.1 449.0L640.4 450.0L641.1 450.9L642.3 451.9L643.9 452.8L646.1 453.7L648.6 454.6L651.7 455.5L655.1 456.4L659.0 457.2L663.3 458.0L667.9 458.7L672.9 459.4L678.3 460.1L684.0 460.7L689.9 461.2L696.2 461.7L702.6 462.2L709.3 462.6L716.2 462.9L723.2 463.2L730.3 463.4L737.6 463.6L744.9 463.7L752.2 463.7L759.5 463.7L766.8 463.6L774.1 463.4L781.2 463.2L788.2 462.9L795.1 462.6L801.8 462.2L808.2 461.7L814.5 461.2L820.4 460.7L826.1 460.1L831.5 459.4L836.5 458.7L841.1 458.0L845.4 457.2L849.3 456.4L852.7 455.5L855.8 454.6L858.3 453.7L860.5 452.8L862.1 451.9L863.3 450.9L864.0 450.0L864.3 449.0M638.9 454.0L639.2 455.0L639.9 455.9L641.1 456.9L642.8 457.8L645.0 458.8L647.6 459.7L650.6 460.6L654.1 461.4L658.0 462.3L662.4 463.0L667.1 463.8L672.1 464.5L677.5 465.2L683.3 465.8L689.3 466.4L695.6 466.9L702.1 467.3L708.9 467.7L715.8 468.1L722.9 468.4L730.1 468.6L737.4 468.7L744.8 468.8L752.2 468.9L759.6 468.8L767.0 468.7L774.3 468.6L781.5 468.4L788.6 468.1L795.5 467.7L802.3 467.3L808.8 466.9L815.1 466.4L821.1 465.8L826.9 465.2L832.3 464.5L837.3 463.8L842.0 463.0L846.4 462.3L850.3 461.4L853.8 460.6L856.8 459.7L859.4 458.8L861.6 457.8L863.3 456.9L864.5 455.9L865.2 455.0L865.5 454.0M638.2 459.5L638.4 460.5L639.1 461.5L640.4 462.4L642.0 463.4L644.2 464.3L646.8 465.2L649.9 466.1L653.4 467.0L657.4 467.8L661.7 468.6L666.5 469.4L671.6 470.1L677.0 470.8L682.8 471.4L688.8 471.9L695.2 472.5L701.8 472.9L708.6 473.3L715.5 473.7L722.7 474.0L730.0 474.2L737.3 474.3L744.7 474.4L752.2 474.5L759.7 474.4L767.1 474.3L774.4 474.2L781.7 474.0L788.9 473.7L795.8 473.3L802.6 472.9L809.2 472.5L815.6 471.9L821.6 471.4L827.4 470.8L832.8 470.1L837.9 469.4L842.7 468.6L847.0 467.8L851.0 467.0L854.5 466.1L857.6 465.2L860.2 464.3L862.4 463.4L864.0 462.4L865.3 461.5L866.0 460.5L866.2 459.5M637.9 465.0L638.1 466.0L638.9 467.0L640.1 467.9L641.8 468.9L644.0 469.8L646.6 470.7L649.7 471.6L653.2 472.5L657.2 473.3L661.5 474.1L666.3 474.9L671.4 475.6L676.8 476.3L682.6 476.9L688.7 477.5L695.1 478.0L701.6 478.5L708.5 478.9L715.5 479.2L722.6 479.5L729.9 479.7L737.3 479.9L744.7 480.0L752.2 480.0L759.7 480.0L767.1 479.9L774.5 479.7L781.8 479.5L788.9 479.2L795.9 478.9L802.8 478.5L809.4 478.0L815.7 477.5L821.8 476.9L827.6 476.3L833.0 475.6L838.1 474.9L842.9 474.1L847.2 473.3L851.2 472.5L854.7 471.6L857.8 470.7L860.4 469.8L862.6 468.9L864.3 467.9L865.5 467.0L866.3 466.0L866.5 465.0M637.9 471.6L638.1 472.6L638.9 473.6L640.1 474.5L641.8 475.5L644.0 476.4L646.6 477.3L649.7 478.2L653.2 479.1L657.2 479.9L661.5 480.7L666.3 481.5L671.4 482.2L676.8 482.9L682.6 483.5L688.7 484.1L695.1 484.6L701.6 485.1L708.5 485.5L715.5 485.8L722.6 486.1L729.9 486.3L737.3 486.5L744.7 486.6L752.2 486.6L759.7 486.6L767.1 486.5L774.5 486.3L781.8 486.1L788.9 485.8L795.9 485.5L802.8 485.1L809.4 484.6L815.7 484.1L821.8 483.5L827.6 482.9L833.0 482.2L838.1 481.5L842.9 480.7L847.2 479.9L851.2 479.1L854.7 478.2L857.8 477.3L860.4 476.4L862.6 475.5L864.3 474.5L865.5 473.6L866.3 472.6L866.5 471.6M637.9 478.2L638.1 479.2L638.9 480.2L640.1 481.1L641.8 482.1L644.0 483.0L646.6 483.9L649.7 484.8L653.2 485.7L657.2 486.5L661.5 487.3L666.3 488.1L671.4 488.8L676.8 489.5L682.6 490.1L688.7 490.7L695.1 491.2L701.6 491.7L708.5 492.1L715.5 492.4L722.6 492.7L729.9 492.9L737.3 493.1L744.7 493.2L752.2 493.2L759.7 493.2L767.1 493.1L774.5 492.9L781.8 492.7L788.9 492.4L795.9 492.1L802.8 491.7L809.4 491.2L815.7 490.7L821.8 490.1L827.6 489.5L833.0 488.8L838.1 488.1L842.9 487.3L847.2 486.5L851.2 485.7L854.7 484.8L857.8 483.9L860.4 483.0L862.6 482.1L864.3 481.1L865.5 480.2L866.3 479.2L866.5 478.2M637.9 484.8L638.1 485.8L638.9 486.8L640.1 487.7L641.8 488.7L644.0 489.6L646.6 490.5L649.7 491.4L653.2 492.3L657.2 493.1L661.5 493.9L666.3 494.7L671.4 495.4L676.8 496.1L682.6 496.7L688.7 497.3L695.1 497.8L701.6 498.3L708.5 498.7L715.5 499.0L722.6 499.3L729.9 499.5L737.3 499.7L744.7 499.8L752.2 499.8L759.7 499.8L767.1 499.7L774.5 499.5L781.8 499.3L788.9 499.0L795.9 498.7L802.8 498.3L809.4 497.8L815.7 497.3L821.8 496.7L827.6 496.1L833.0 495.4L838.1 494.7L842.9 493.9L847.2 493.1L851.2 492.3L854.7 491.4L857.8 490.5L860.4 489.6L862.6 488.7L864.3 487.7L865.5 486.8L866.3 485.8L866.5 484.8M637.9 491.4L638.1 492.4L638.9 493.4L640.1 494.3L641.8 495.3L644.0 496.2L646.6 497.1L649.7 498.0L653.2 498.9L657.2 499.7L661.5 500.5L666.3 501.3L671.4 502.0L676.8 502.7L682.6 503.3L688.7 503.9L695.1 504.4L701.6 504.9L708.5 505.3L715.5 505.6L722.6 505.9L729.9 506.1L737.3 506.3L744.7 506.4L752.2 506.4L759.7 506.4L767.1 506.3L774.5 506.1L781.8 505.9L788.9 505.6L795.9 505.3L802.8 504.9L809.4 504.4L815.7 503.9L821.8 503.3L827.6 502.7L833.0 502.0L838.1 501.3L842.9 500.5L847.2 499.7L851.2 498.9L854.7 498.0L857.8 497.1L860.4 496.2L862.6 495.3L864.3 494.3L865.5 493.4L866.3 492.4L866.5 491.4M637.9 498.0L638.1 499.0L638.9 500.0L640.1 500.9L641.8 501.9L644.0 502.8L646.6 503.7L649.7 504.6L653.2 505.5L657.2 506.3L661.5 507.1L666.3 507.9L671.4 508.6L676.8 509.3L682.6 509.9L688.7 510.5L695.1 511.0L701.6 511.5L708.5 511.9L715.5 512.2L722.6 512.5L729.9 512.7L737.3 512.9L744.7 513.0L752.2 513.0L759.7 513.0L767.1 512.9L774.5 512.7L781.8 512.5L788.9 512.2L795.9 511.9L802.8 511.5L809.4 511.0L815.7 510.5L821.8 509.9L827.6 509.3L833.0 508.6L838.1 507.9L842.9 507.1L847.2 506.3L851.2 505.5L854.7 504.6L857.8 503.7L860.4 502.8L862.6 501.9L864.3 500.9L865.5 500.0L866.3 499.0L866.5 498.0M637.9 504.6L638.1 505.6L638.9 506.6L640.1 507.5L641.8 508.5L644.0 509.4L646.6 510.3L649.7 511.2L653.2 512.1L657.2 512.9L661.5 513.7L666.3 514.5L671.4 515.2L676.8 515.9L682.6 516.5L688.7 517.1L695.1 517.6L701.6 518.1L708.5 518.5L715.5 518.8L722.6 519.1L729.9 519.3L737.3 519.5L744.7 519.6L752.2 519.6L759.7 519.6L767.1 519.5L774.5 519.3L781.8 519.1L788.9 518.8L795.9 518.5L802.8 518.1L809.4 517.6L815.7 517.1L821.8 516.5L827.6 515.9L833.0 515.2L838.1 514.5L842.9 513.7L847.2 512.9L851.2 512.1L854.7 511.2L857.8 510.3L860.4 509.4L862.6 508.5L864.3 507.5L865.5 506.6L866.3 505.6L866.5 504.6M637.9 511.2L638.1 512.2L638.9 513.2L640.1 514.1L641.8 515.1L644.0 516.0L646.6 516.9L649.7 517.8L653.2 518.7L657.2 519.5L661.5 520.3L666.3 521.1L671.4 521.8L676.8 522.5L682.6 523.1L688.7 523.7L695.1 524.2L701.6 524.7L708.5 525.1L715.5 525.4L722.6 525.7L729.9 525.9L737.3 526.1L744.7 526.2L752.2 526.2L759.7 526.2L767.1 526.1L774.5 525.9L781.8 525.7L788.9 525.4L795.9 525.1L802.8 524.7L809.4 524.2L815.7 523.7L821.8 523.1L827.6 522.5L833.0 521.8L838.1 521.1L842.9 520.3L847.2 519.5L851.2 518.7L854.7 517.8L857.8 516.9L860.4 516.0L862.6 515.1L864.3 514.1L865.5 513.2L866.3 512.2L866.5 511.2M637.9 517.8L638.1 518.8L638.9 519.8L640.1 520.7L641.8 521.7L644.0 522.6L646.6 523.5L649.7 524.4L653.2 525.3L657.2 526.1L661.5 526.9L666.3 527.7L671.4 528.4L676.8 529.1L682.6 529.7L688.7 530.3L695.1 530.8L701.6 531.3L708.5 531.7L715.5 532.0L722.6 532.3L729.9 532.5L737.3 532.7L744.7 532.8L752.2 532.8L759.7 532.8L767.1 532.7L774.5 532.5L781.8 532.3L788.9 532.0L795.9 531.7L802.8 531.3L809.4 530.8L815.7 530.3L821.8 529.7L827.6 529.1L833.0 528.4L838.1 527.7L842.9 526.9L847.2 526.1L851.2 525.3L854.7 524.4L857.8 523.5L860.4 522.6L862.6 521.7L864.3 520.7L865.5 519.8L866.3 518.8L866.5 517.8M637.9 524.4L638.1 525.4L638.9 526.4L640.1 527.3L641.8 528.3L644.0 529.2L646.6 530.1L649.7 531.0L653.2 531.9L657.2 532.7L661.5 533.5L666.3 534.3L671.4 535.0L676.8 535.7L682.6 536.3L688.7 536.9L695.1 537.4L701.6 537.9L708.5 538.3L715.5 538.6L722.6 538.9L729.9 539.1L737.3 539.3L744.7 539.4L752.2 539.4L759.7 539.4L767.1 539.3L774.5 539.1L781.8 538.9L788.9 538.6L795.9 538.3L802.8 537.9L809.4 537.4L815.7 536.9L821.8 536.3L827.6 535.7L833.0 535.0L838.1 534.3L842.9 533.5L847.2 532.7L851.2 531.9L854.7 531.0L857.8 530.1L860.4 529.2L862.6 528.3L864.3 527.3L865.5 526.4L866.3 525.4L866.5 524.4M637.9 531.0L638.1 532.0L638.9 533.0L640.1 533.9L641.8 534.9L644.0 535.8L646.6 536.7L649.7 537.6L653.2 538.5L657.2 539.3L661.5 540.1L666.3 540.9L671.4 541.6L676.8 542.3L682.6 542.9L688.7 543.5L695.1 544.0L701.6 544.5L708.5 544.9L715.5 545.2L722.6 545.5L729.9 545.7L737.3 545.9L744.7 546.0L752.2 546.0L759.7 546.0L767.1 545.9L774.5 545.7L781.8 545.5L788.9 545.2L795.9 544.9L802.8 544.5L809.4 544.0L815.7 543.5L821.8 542.9L827.6 542.3L833.0 541.6L838.1 540.9L842.9 540.1L847.2 539.3L851.2 538.5L854.7 537.6L857.8 536.7L860.4 535.8L862.6 534.9L864.3 533.9L865.5 533.0L866.3 532.0L866.5 531.0M637.9 537.6L638.1 538.6L638.9 539.6L640.1 540.5L641.8 541.5L644.0 542.4L646.6 543.3L649.7 544.2L653.2 545.1L657.2 545.9L661.5 546.7L666.3 547.5L671.4 548.2L676.8 548.9L682.6 549.5L688.7 550.1L695.1 550.6L701.6 551.1L708.5 551.5L715.5 551.8L722.6 552.1L729.9 552.3L737.3 552.5L744.7 552.6L752.2 552.6L759.7 552.6L767.1 552.5L774.5 552.3L781.8 552.1L788.9 551.8L795.9 551.5L802.8 551.1L809.4 550.6L815.7 550.1L821.8 549.5L827.6 548.9L833.0 548.2L838.1 547.5L842.9 546.7L847.2 545.9L851.2 545.1L854.7 544.2L857.8 543.3L860.4 542.4L862.6 541.5L864.3 540.5L865.5 539.6L866.3 538.6L866.5 537.6M637.9 544.2L638.1 545.2L638.9 546.2L640.1 547.1L641.8 548.1L644.0 549.0L646.6 549.9L649.7 550.8L653.2 551.7L657.2 552.5L661.5 553.3L666.3 554.1L671.4 554.8L676.8 555.5L682.6 556.1L688.7 556.7L695.1 557.2L701.6 557.7L708.5 558.1L715.5 558.4L722.6 558.7L729.9 558.9L737.3 559.1L744.7 559.2L752.2 559.2L759.7 559.2L767.1 559.1L774.5 558.9L781.8 558.7L788.9 558.4L795.9 558.1L802.8 557.7L809.4 557.2L815.7 556.7L821.8 556.1L827.6 555.5L833.0 554.8L838.1 554.1L842.9 553.3L847.2 552.5L851.2 551.7L854.7 550.8L857.8 549.9L860.4 549.0L862.6 548.1L864.3 547.1L865.5 546.2L866.3 545.2L866.5 544.2M637.9 550.8L638.1 551.8L638.9 552.8L640.1 553.7L641.8 554.7L644.0 555.6L646.6 556.5L649.7 557.4L653.2 558.3L657.2 559.1L661.5 559.9L666.3 560.7L671.4 561.4L676.8 562.1L682.6 562.7L688.7 563.3L695.1 563.8L701.6 564.3L708.5 564.7L715.5 565.0L722.6 565.3L729.9 565.5L737.3 565.7L744.7 565.8L752.2 565.8L759.7 565.8L767.1 565.7L774.5 565.5L781.8 565.3L788.9 565.0L795.9 564.7L802.8 564.3L809.4 563.8L815.7 563.3L821.8 562.7L827.6 562.1L833.0 561.4L838.1 560.7L842.9 559.9L847.2 559.1L851.2 558.3L854.7 557.4L857.8 556.5L860.4 555.6L862.6 554.7L864.3 553.7L865.5 552.8L866.3 551.8L866.5 550.8M637.9 557.4L638.1 558.4L638.9 559.4L640.1 560.3L641.8 561.3L644.0 562.2L646.6 563.1L649.7 564.0L653.2 564.9L657.2 565.7L661.5 566.5L666.3 567.3L671.4 568.0L676.8 568.7L682.6 569.3L688.7 569.9L695.1 570.4L701.6 570.9L708.5 571.3L715.5 571.6L722.6 571.9L729.9 572.1L737.3 572.3L744.7 572.4L752.2 572.4L759.7 572.4L767.1 572.3L774.5 572.1L781.8 571.9L788.9 571.6L795.9 571.3L802.8 570.9L809.4 570.4L815.7 569.9L821.8 569.3L827.6 568.7L833.0 568.0L838.1 567.3L842.9 566.5L847.2 565.7L851.2 564.9L854.7 564.0L857.8 563.1L860.4 562.2L862.6 561.3L864.3 560.3L865.5 559.4L866.3 558.4L866.5 557.4M637.9 564.0L638.1 565.0L638.9 566.0L640.1 566.9L641.8 567.9L644.0 568.8L646.6 569.7L649.7 570.6L653.2 571.5L657.2 572.3L661.5 573.1L666.3 573.9L671.4 574.6L676.8 575.3L682.6 575.9L688.7 576.5L695.1 577.0L701.6 577.5L708.5 577.9L715.5 578.2L722.6 578.5L729.9 578.7L737.3 578.9L744.7 579.0L752.2 579.0L759.7 579.0L767.1 578.9L774.5 578.7L781.8 578.5L788.9 578.2L795.9 577.9L802.8 577.5L809.4 577.0L815.7 576.5L821.8 575.9L827.6 575.3L833.0 574.6L838.1 573.9L842.9 573.1L847.2 572.3L851.2 571.5L854.7 570.6L857.8 569.7L860.4 568.8L862.6 567.9L864.3 566.9L865.5 566.0L866.3 565.0L866.5 564.0M637.9 570.6L638.1 571.6L638.9 572.6L640.1 573.5L641.8 574.5L644.0 575.4L646.6 576.3L649.7 577.2L653.2 578.1L657.2 578.9L661.5 579.7L666.3 580.5L671.4 581.2L676.8 581.9L682.6 582.5L688.7 583.1L695.1 583.6L701.6 584.1L708.5 584.5L715.5 584.8L722.6 585.1L729.9 585.3L737.3 585.5L744.7 585.6L752.2 585.6L759.7 585.6L767.1 585.5L774.5 585.3L781.8 585.1L788.9 584.8L795.9 584.5L802.8 584.1L809.4 583.6L815.7 583.1L821.8 582.5L827.6 581.9L833.0 581.2L838.1 580.5L842.9 579.7L847.2 578.9L851.2 578.1L854.7 577.2L857.8 576.3L860.4 575.4L862.6 574.5L864.3 573.5L865.5 572.6L866.3 571.6L866.5 570.6M637.9 577.2L638.1 578.2L638.9 579.2L640.1 580.1L641.8 581.1L644.0 582.0L646.6 582.9L649.7 583.8L653.2 584.7L657.2 585.5L661.5 586.3L666.3 587.1L671.4 587.8L676.8 588.5L682.6 589.1L688.7 589.7L695.1 590.2L701.6 590.7L708.5 591.1L715.5 591.4L722.6 591.7L729.9 591.9L737.3 592.1L744.7 592.2L752.2 592.2L759.7 592.2L767.1 592.1L774.5 591.9L781.8 591.7L788.9 591.4L795.9 591.1L802.8 590.7L809.4 590.2L815.7 589.7L821.8 589.1L827.6 588.5L833.0 587.8L838.1 587.1L842.9 586.3L847.2 585.5L851.2 584.7L854.7 583.8L857.8 582.9L860.4 582.0L862.6 581.1L864.3 580.1L865.5 579.2L866.3 578.2L866.5 577.2M637.9 583.8L638.1 584.8L638.9 585.8L640.1 586.7L641.8 587.7L644.0 588.6L646.6 589.5L649.7 590.4L653.2 591.3L657.2 592.1L661.5 592.9L666.3 593.7L671.4 594.4L676.8 595.1L682.6 595.7L688.7 596.3L695.1 596.8L701.6 597.3L708.5 597.7L715.5 598.0L722.6 598.3L729.9 598.5L737.3 598.7L744.7 598.8L752.2 598.8L759.7 598.8L767.1 598.7L774.5 598.5L781.8 598.3L788.9 598.0L795.9 597.7L802.8 597.3L809.4 596.8L815.7 596.3L821.8 595.7L827.6 595.1L833.0 594.4L838.1 593.7L842.9 592.9L847.2 592.1L851.2 591.3L854.7 590.4L857.8 589.5L860.4 588.6L862.6 587.7L864.3 586.7L865.5 585.8L866.3 584.8L866.5 583.8M637.9 590.4L638.1 591.4L638.9 592.4L640.1 593.3L641.8 594.3L644.0 595.2L646.6 596.1L649.7 597.0L653.2 597.9L657.2 598.7L661.5 599.5L666.3 600.3L671.4 601.0L676.8 601.7L682.6 602.3L688.7 602.9L695.1 603.4L701.6 603.9L708.5 604.3L715.5 604.6L722.6 604.9L729.9 605.1L737.3 605.3L744.7 605.4L752.2 605.4L759.7 605.4L767.1 605.3L774.5 605.1L781.8 604.9L788.9 604.6L795.9 604.3L802.8 603.9L809.4 603.4L815.7 602.9L821.8 602.3L827.6 601.7L833.0 601.0L838.1 600.3L842.9 599.5L847.2 598.7L851.2 597.9L854.7 597.0L857.8 596.1L860.4 595.2L862.6 594.3L864.3 593.3L865.5 592.4L866.3 591.4L866.5 590.4M637.9 597.0L638.1 598.0L638.9 599.0L640.1 599.9L641.8 600.9L644.0 601.8L646.6 602.7L649.7 603.6L653.2 604.5L657.2 605.3L661.5 606.1L666.3 606.9L671.4 607.6L676.8 608.3L682.6 608.9L688.7 609.5L695.1 610.0L701.6 610.5L708.5 610.9L715.5 611.2L722.6 611.5L729.9 611.7L737.3 611.9L744.7 612.0L752.2 612.0L759.7 612.0L767.1 611.9L774.5 611.7L781.8 611.5L788.9 611.2L795.9 610.9L802.8 610.5L809.4 610.0L815.7 609.5L821.8 608.9L827.6 608.3L833.0 607.6L838.1 606.9L842.9 606.1L847.2 605.3L851.2 604.5L854.7 603.6L857.8 602.7L860.4 601.8L862.6 600.9L864.3 599.9L865.5 599.0L866.3 598.0L866.5 597.0M637.9 603.6L638.1 604.6L638.9 605.6L640.1 606.5L641.8 607.5L644.0 608.4L646.6 609.3L649.7 610.2L653.2 611.1L657.2 611.9L661.5 612.7L666.3 613.5L671.4 614.2L676.8 614.9L682.6 615.5L688.7 616.1L695.1 616.6L701.6 617.1L708.5 617.5L715.5 617.8L722.6 618.1L729.9 618.3L737.3 618.5L744.7 618.6L752.2 618.6L759.7 618.6L767.1 618.5L774.5 618.3L781.8 618.1L788.9 617.8L795.9 617.5L802.8 617.1L809.4 616.6L815.7 616.1L821.8 615.5L827.6 614.9L833.0 614.2L838.1 613.5L842.9 612.7L847.2 611.9L851.2 611.1L854.7 610.2L857.8 609.3L860.4 608.4L862.6 607.5L864.3 606.5L865.5 605.6L866.3 604.6L866.5 603.6M637.9 610.2L638.1 611.2L638.9 612.2L640.1 613.1L641.8 614.1L644.0 615.0L646.6 615.9L649.7 616.8L653.2 617.7L657.2 618.5L661.5 619.3L666.3 620.1L671.4 620.8L676.8 621.5L682.6 622.1L688.7 622.7L695.1 623.2L701.6 623.7L708.5 624.1L715.5 624.4L722.6 624.7L729.9 624.9L737.3 625.1L744.7 625.2L752.2 625.2L759.7 625.2L767.1 625.1L774.5 624.9L781.8 624.7L788.9 624.4L795.9 624.1L802.8 623.7L809.4 623.2L815.7 622.7L821.8 622.1L827.6 621.5L833.0 620.8L838.1 620.1L842.9 619.3L847.2 618.5L851.2 617.7L854.7 616.8L857.8 615.9L860.4 615.0L862.6 614.1L864.3 613.1L865.5 612.2L866.3 611.2L866.5 610.2M637.9 616.8L638.1 617.8L638.9 618.8L640.1 619.7L641.8 620.7L644.0 621.6L646.6 622.5L649.7 623.4L653.2 624.3L657.2 625.1L661.5 625.9L666.3 626.7L671.4 627.4L676.8 628.1L682.6 628.7L688.7 629.3L695.1 629.8L701.6 630.3L708.5 630.7L715.5 631.0L722.6 631.3L729.9 631.5L737.3 631.7L744.7 631.8L752.2 631.8L759.7 631.8L767.1 631.7L774.5 631.5L781.8 631.3L788.9 631.0L795.9 630.7L802.8 630.3L809.4 629.8L815.7 629.3L821.8 628.7L827.6 628.1L833.0 627.4L838.1 626.7L842.9 625.9L847.2 625.1L851.2 624.3L854.7 623.4L857.8 622.5L860.4 621.6L862.6 620.7L864.3 619.7L865.5 618.8L866.3 617.8L866.5 616.8M637.9 623.4L638.1 624.4L638.9 625.4L640.1 626.3L641.8 627.3L644.0 628.2L646.6 629.1L649.7 630.0L653.2 630.9L657.2 631.7L661.5 632.5L666.3 633.3L671.4 634.0L676.8 634.7L682.6 635.3L688.7 635.9L695.1 636.4L701.6 636.9L708.5 637.3L715.5 637.6L722.6 637.9L729.9 638.1L737.3 638.3L744.7 638.4L752.2 638.4L759.7 638.4L767.1 638.3L774.5 638.1L781.8 637.9L788.9 637.6L795.9 637.3L802.8 636.9L809.4 636.4L815.7 635.9L821.8 635.3L827.6 634.7L833.0 634.0L838.1 633.3L842.9 632.5L847.2 631.7L851.2 630.9L854.7 630.0L857.8 629.1L860.4 628.2L862.6 627.3L864.3 626.3L865.5 625.4L866.3 624.4L866.5 623.4M637.9 630.0L638.1 631.0L638.9 632.0L640.1 632.9L641.8 633.9L644.0 634.8L646.6 635.7L649.7 636.6L653.2 637.5L657.2 638.3L661.5 639.1L666.3 639.9L671.4 640.6L676.8 641.3L682.6 641.9L688.7 642.5L695.1 643.0L701.6 643.5L708.5 643.9L715.5 644.2L722.6 644.5L729.9 644.7L737.3 644.9L744.7 645.0L752.2 645.0L759.7 645.0L767.1 644.9L774.5 644.7L781.8 644.5L788.9 644.2L795.9 643.9L802.8 643.5L809.4 643.0L815.7 642.5L821.8 641.9L827.6 641.3L833.0 640.6L838.1 639.9L842.9 639.1L847.2 638.3L851.2 637.5L854.7 636.6L857.8 635.7L860.4 634.8L862.6 633.9L864.3 632.9L865.5 632.0L866.3 631.0L866.5 630.0M637.9 636.6L638.1 637.6L638.9 638.6L640.1 639.5L641.8 640.5L644.0 641.4L646.6 642.3L649.7 643.2L653.2 644.1L657.2 644.9L661.5 645.7L666.3 646.5L671.4 647.2L676.8 647.9L682.6 648.5L688.7 649.1L695.1 649.6L701.6 650.1L708.5 650.5L715.5 650.8L722.6 651.1L729.9 651.3L737.3 651.5L744.7 651.6L752.2 651.6L759.7 651.6L767.1 651.5L774.5 651.3L781.8 651.1L788.9 650.8L795.9 650.5L802.8 650.1L809.4 649.6L815.7 649.1L821.8 648.5L827.6 647.9L833.0 647.2L838.1 646.5L842.9 645.7L847.2 644.9L851.2 644.1L854.7 643.2L857.8 642.3L860.4 641.4L862.6 640.5L864.3 639.5L865.5 638.6L866.3 637.6L866.5 636.6M637.9 643.2L638.1 644.2L638.9 645.2L640.1 646.1L641.8 647.1L644.0 648.0L646.6 648.9L649.7 649.8L653.2 650.7L657.2 651.5L661.5 652.3L666.3 653.1L671.4 653.8L676.8 654.5L682.6 655.1L688.7 655.7L695.1 656.2L701.6 656.7L708.5 657.1L715.5 657.4L722.6 657.7L729.9 657.9L737.3 658.1L744.7 658.2L752.2 658.2L759.7 658.2L767.1 658.1L774.5 657.9L781.8 657.7L788.9 657.4L795.9 657.1L802.8 656.7L809.4 656.2L815.7 655.7L821.8 655.1L827.6 654.5L833.0 653.8L838.1 653.1L842.9 652.3L847.2 651.5L851.2 650.7L854.7 649.8L857.8 648.9L860.4 648.0L862.6 647.1L864.3 646.1L865.5 645.2L866.3 644.2L866.5 643.2M637.9 649.8L638.1 650.8L638.9 651.8L640.1 652.7L641.8 653.7L644.0 654.6L646.6 655.5L649.7 656.4L653.2 657.3L657.2 658.1L661.5 658.9L666.3 659.7L671.4 660.4L676.8 661.1L682.6 661.7L688.7 662.3L695.1 662.8L701.6 663.3L708.5 663.7L715.5 664.0L722.6 664.3L729.9 664.5L737.3 664.7L744.7 664.8L752.2 664.8L759.7 664.8L767.1 664.7L774.5 664.5L781.8 664.3L788.9 664.0L795.9 663.7L802.8 663.3L809.4 662.8L815.7 662.3L821.8 661.7L827.6 661.1L833.0 660.4L838.1 659.7L842.9 658.9L847.2 658.1L851.2 657.3L854.7 656.4L857.8 655.5L860.4 654.6L862.6 653.7L864.3 652.7L865.5 651.8L866.3 650.8L866.5 649.8M637.9 656.4L638.1 657.4L638.9 658.4L640.1 659.3L641.8 660.3L644.0 661.2L646.6 662.1L649.7 663.0L653.2 663.9L657.2 664.7L661.5 665.5L666.3 666.3L671.4 667.0L676.8 667.7L682.6 668.3L688.7 668.9L695.1 669.4L701.6 669.9L708.5 670.3L715.5 670.6L722.6 670.9L729.9 671.1L737.3 671.3L744.7 671.4L752.2 671.4L759.7 671.4L767.1 671.3L774.5 671.1L781.8 670.9L788.9 670.6L795.9 670.3L802.8 669.9L809.4 669.4L815.7 668.9L821.8 668.3L827.6 667.7L833.0 667.0L838.1 666.3L842.9 665.5L847.2 664.7L851.2 663.9L854.7 663.0L857.8 662.1L860.4 661.2L862.6 660.3L864.3 659.3L865.5 658.4L866.3 657.4L866.5 656.4M637.9 663.0L638.1 664.0L638.9 665.0L640.1 665.9L641.8 666.9L644.0 667.8L646.6 668.7L649.7 669.6L653.2 670.5L657.2 671.3L661.5 672.1L666.3 672.9L671.4 673.6L676.8 674.3L682.6 674.9L688.7 675.5L695.1 676.0L701.6 676.5L708.5 676.9L715.5 677.2L722.6 677.5L729.9 677.7L737.3 677.9L744.7 678.0L752.2 678.0L759.7 678.0L767.1 677.9L774.5 677.7L781.8 677.5L788.9 677.2L795.9 676.9L802.8 676.5L809.4 676.0L815.7 675.5L821.8 674.9L827.6 674.3L833.0 673.6L838.1 672.9L842.9 672.1L847.2 671.3L851.2 670.5L854.7 669.6L857.8 668.7L860.4 667.8L862.6 666.9L864.3 665.9L865.5 665.0L866.3 664.0L866.5 663.0M637.9 669.6L638.1 670.6L638.9 671.6L640.1 672.5L641.8 673.5L644.0 674.4L646.6 675.3L649.7 676.2L653.2 677.1L657.2 677.9L661.5 678.7L666.3 679.5L671.4 680.2L676.8 680.9L682.6 681.5L688.7 682.1L695.1 682.6L701.6 683.1L708.5 683.5L715.5 683.8L722.6 684.1L729.9 684.3L737.3 684.5L744.7 684.6L752.2 684.6L759.7 684.6L767.1 684.5L774.5 684.3L781.8 684.1L788.9 683.8L795.9 683.5L802.8 683.1L809.4 682.6L815.7 682.1L821.8 681.5L827.6 680.9L833.0 680.2L838.1 679.5L842.9 678.7L847.2 677.9L851.2 677.1L854.7 676.2L857.8 675.3L860.4 674.4L862.6 673.5L864.3 672.5L865.5 671.6L866.3 670.6L866.5 669.6M637.9 676.2L638.1 677.2L638.9 678.2L640.1 679.1L641.8 680.1L644.0 681.0L646.6 681.9L649.7 682.8L653.2 683.7L657.2 684.5L661.5 685.3L666.3 686.1L671.4 686.8L676.8 687.5L682.6 688.1L688.7 688.7L695.1 689.2L701.6 689.7L708.5 690.1L715.5 690.4L722.6 690.7L729.9 690.9L737.3 691.1L744.7 691.2L752.2 691.2L759.7 691.2L767.1 691.1L774.5 690.9L781.8 690.7L788.9 690.4L795.9 690.1L802.8 689.7L809.4 689.2L815.7 688.7L821.8 688.1L827.6 687.5L833.0 686.8L838.1 686.1L842.9 685.3L847.2 684.5L851.2 683.7L854.7 682.8L857.8 681.9L860.4 681.0L862.6 680.1L864.3 679.1L865.5 678.2L866.3 677.2L866.5 676.2M637.9 682.8L638.1 683.8L638.9 684.8L640.1 685.7L641.8 686.7L644.0 687.6L646.6 688.5L649.7 689.4L653.2 690.3L657.2 691.1L661.5 691.9L666.3 692.7L671.4 693.4L676.8 694.1L682.6 694.7L688.7 695.3L695.1 695.8L701.6 696.3L708.5 696.7L715.5 697.0L722.6 697.3L729.9 697.5L737.3 697.7L744.7 697.8L752.2 697.8L759.7 697.8L767.1 697.7L774.5 697.5L781.8 697.3L788.9 697.0L795.9 696.7L802.8 696.3L809.4 695.8L815.7 695.3L821.8 694.7L827.6 694.1L833.0 693.4L838.1 692.7L842.9 691.9L847.2 691.1L851.2 690.3L854.7 689.4L857.8 688.5L860.4 687.6L862.6 686.7L864.3 685.7L865.5 684.8L866.3 683.8L866.5 682.8M637.9 689.4L638.1 690.4L638.9 691.4L640.1 692.3L641.8 693.3L644.0 694.2L646.6 695.1L649.7 696.0L653.2 696.9L657.2 697.7L661.5 698.5L666.3 699.3L671.4 700.0L676.8 700.7L682.6 701.3L688.7 701.9L695.1 702.4L701.6 702.9L708.5 703.3L715.5 703.6L722.6 703.9L729.9 704.1L737.3 704.3L744.7 704.4L752.2 704.4L759.7 704.4L767.1 704.3L774.5 704.1L781.8 703.9L788.9 703.6L795.9 703.3L802.8 702.9L809.4 702.4L815.7 701.9L821.8 701.3L827.6 700.7L833.0 700.0L838.1 699.3L842.9 698.5L847.2 697.7L851.2 696.9L854.7 696.0L857.8 695.1L860.4 694.2L862.6 693.3L864.3 692.3L865.5 691.4L866.3 690.4L866.5 689.4M637.9 696.0L638.1 697.0L638.9 698.0L640.1 698.9L641.8 699.9L644.0 700.8L646.6 701.7L649.7 702.6L653.2 703.5L657.2 704.3L661.5 705.1L666.3 705.9L671.4 706.6L676.8 707.3L682.6 707.9L688.7 708.5L695.1 709.0L701.6 709.5L708.5 709.9L715.5 710.2L722.6 710.5L729.9 710.7L737.3 710.9L744.7 711.0L752.2 711.0L759.7 711.0L767.1 710.9L774.5 710.7L781.8 710.5L788.9 710.2L795.9 709.9L802.8 709.5L809.4 709.0L815.7 708.5L821.8 707.9L827.6 707.3L833.0 706.6L838.1 705.9L842.9 705.1L847.2 704.3L851.2 703.5L854.7 702.6L857.8 701.7L860.4 700.8L862.6 699.9L864.3 698.9L865.5 698.0L866.3 697.0L866.5 696.0M637.9 702.6L638.1 703.6L638.9 704.6L640.1 705.5L641.8 706.5L644.0 707.4L646.6 708.3L649.7 709.2L653.2 710.1L657.2 710.9L661.5 711.7L666.3 712.5L671.4 713.2L676.8 713.9L682.6 714.5L688.7 715.1L695.1 715.6L701.6 716.1L708.5 716.5L715.5 716.8L722.6 717.1L729.9 717.3L737.3 717.5L744.7 717.6L752.2 717.6L759.7 717.6L767.1 717.5L774.5 717.3L781.8 717.1L788.9 716.8L795.9 716.5L802.8 716.1L809.4 715.6L815.7 715.1L821.8 714.5L827.6 713.9L833.0 713.2L838.1 712.5L842.9 711.7L847.2 710.9L851.2 710.1L854.7 709.2L857.8 708.3L860.4 707.4L862.6 706.5L864.3 705.5L865.5 704.6L866.3 703.6L866.5 702.6M637.9 709.2L638.1 710.2L638.9 711.2L640.1 712.1L641.8 713.1L644.0 714.0L646.6 714.9L649.7 715.8L653.2 716.7L657.2 717.5L661.5 718.3L666.3 719.1L671.4 719.8L676.8 720.5L682.6 721.1L688.7 721.7L695.1 722.2L701.6 722.7L708.5 723.1L715.5 723.4L722.6 723.7L729.9 723.9L737.3 724.1L744.7 724.2L752.2 724.2L759.7 724.2L767.1 724.1L774.5 723.9L781.8 723.7L788.9 723.4L795.9 723.1L802.8 722.7L809.4 722.2L815.7 721.7L821.8 721.1L827.6 720.5L833.0 719.8L838.1 719.1L842.9 718.3L847.2 717.5L851.2 716.7L854.7 715.8L857.8 714.9L860.4 714.0L862.6 713.1L864.3 712.1L865.5 711.2L866.3 710.2L866.5 709.2M637.9 715.8L638.1 716.8L638.9 717.8L640.1 718.7L641.8 719.7L644.0 720.6L646.6 721.5L649.7 722.4L653.2 723.3L657.2 724.1L661.5 724.9L666.3 725.7L671.4 726.4L676.8 727.1L682.6 727.7L688.7 728.3L695.1 728.8L701.6 729.3L708.5 729.7L715.5 730.0L722.6 730.3L729.9 730.5L737.3 730.7L744.7 730.8L752.2 730.8L759.7 730.8L767.1 730.7L774.5 730.5L781.8 730.3L788.9 730.0L795.9 729.7L802.8 729.3L809.4 728.8L815.7 728.3L821.8 727.7L827.6 727.1L833.0 726.4L838.1 725.7L842.9 724.9L847.2 724.1L851.2 723.3L854.7 722.4L857.8 721.5L860.4 720.6L862.6 719.7L864.3 718.7L865.5 717.8L866.3 716.8L866.5 715.8M637.9 722.4L638.1 723.4L638.9 724.4L640.1 725.3L641.8 726.3L644.0 727.2L646.6 728.1L649.7 729.0L653.2 729.9L657.2 730.7L661.5 731.5L666.3 732.3L671.4 733.0L676.8 733.7L682.6 734.3L688.7 734.9L695.1 735.4L701.6 735.9L708.5 736.3L715.5 736.6L722.6 736.9L729.9 737.1L737.3 737.3L744.7 737.4L752.2 737.4L759.7 737.4L767.1 737.3L774.5 737.1L781.8 736.9L788.9 736.6L795.9 736.3L802.8 735.9L809.4 735.4L815.7 734.9L821.8 734.3L827.6 733.7L833.0 733.0L838.1 732.3L842.9 731.5L847.2 730.7L851.2 729.9L854.7 729.0L857.8 728.1L860.4 727.2L862.6 726.3L864.3 725.3L865.5 724.4L866.3 723.4L866.5 722.4M637.9 729.0L638.1 730.0L638.9 731.0L640.1 731.9L641.8 732.9L644.0 733.8L646.6 734.7L649.7 735.6L653.2 736.5L657.2 737.3L661.5 738.1L666.3 738.9L671.4 739.6L676.8 740.3L682.6 740.9L688.7 741.5L695.1 742.0L701.6 742.5L708.5 742.9L715.5 743.2L722.6 743.5L729.9 743.7L737.3 743.9L744.7 744.0L752.2 744.0L759.7 744.0L767.1 743.9L774.5 743.7L781.8 743.5L788.9 743.2L795.9 742.9L802.8 742.5L809.4 742.0L815.7 741.5L821.8 740.9L827.6 740.3L833.0 739.6L838.1 738.9L842.9 738.1L847.2 737.3L851.2 736.5L854.7 735.6L857.8 734.7L860.4 733.8L862.6 732.9L864.3 731.9L865.5 731.0L866.3 730.0L866.5 729.0M637.9 735.6L638.1 736.6L638.9 737.6L640.1 738.5L641.8 739.5L644.0 740.4L646.6 741.3L649.7 742.2L653.2 743.1L657.2 743.9L661.5 744.7L666.3 745.5L671.4 746.2L676.8 746.9L682.6 747.5L688.7 748.1L695.1 748.6L701.6 749.1L708.5 749.5L715.5 749.8L722.6 750.1L729.9 750.3L737.3 750.5L744.7 750.6L752.2 750.6L759.7 750.6L767.1 750.5L774.5 750.3L781.8 750.1L788.9 749.8L795.9 749.5L802.8 749.1L809.4 748.6L815.7 748.1L821.8 747.5L827.6 746.9L833.0 746.2L838.1 745.5L842.9 744.7L847.2 743.9L851.2 743.1L854.7 742.2L857.8 741.3L860.4 740.4L862.6 739.5L864.3 738.5L865.5 737.6L866.3 736.6L866.5 735.6M637.9 742.2L638.1 743.2L638.9 744.2L640.1 745.1L641.8 746.1L644.0 747.0L646.6 747.9L649.7 748.8L653.2 749.7L657.2 750.5L661.5 751.3L666.3 752.1L671.4 752.8L676.8 753.5L682.6 754.1L688.7 754.7L695.1 755.2L701.6 755.7L708.5 756.1L715.5 756.4L722.6 756.7L729.9 756.9L737.3 757.1L744.7 757.2L752.2 757.2L759.7 757.2L767.1 757.1L774.5 756.9L781.8 756.7L788.9 756.4L795.9 756.1L802.8 755.7L809.4 755.2L815.7 754.7L821.8 754.1L827.6 753.5L833.0 752.8L838.1 752.1L842.9 751.3L847.2 750.5L851.2 749.7L854.7 748.8L857.8 747.9L860.4 747.0L862.6 746.1L864.3 745.1L865.5 744.2L866.3 743.2L866.5 742.2M637.9 748.8L638.1 749.8L638.9 750.8L640.1 751.7L641.8 752.7L644.0 753.6L646.6 754.5L649.7 755.4L653.2 756.3L657.2 757.1L661.5 757.9L666.3 758.7L671.4 759.4L676.8 760.1L682.6 760.7L688.7 761.3L695.1 761.8L701.6 762.3L708.5 762.7L715.5 763.0L722.6 763.3L729.9 763.5L737.3 763.7L744.7 763.8L752.2 763.8L759.7 763.8L767.1 763.7L774.5 763.5L781.8 763.3L788.9 763.0L795.9 762.7L802.8 762.3L809.4 761.8L815.7 761.3L821.8 760.7L827.6 760.1L833.0 759.4L838.1 758.7L842.9 757.9L847.2 757.1L851.2 756.3L854.7 755.4L857.8 754.5L860.4 753.6L862.6 752.7L864.3 751.7L865.5 750.8L866.3 749.8L866.5 748.8M637.9 755.4L638.1 756.4L638.9 757.4L640.1 758.3L641.8 759.3L644.0 760.2L646.6 761.1L649.7 762.0L653.2 762.9L657.2 763.7L661.5 764.5L666.3 765.3L671.4 766.0L676.8 766.7L682.6 767.3L688.7 767.9L695.1 768.4L701.6 768.9L708.5 769.3L715.5 769.6L722.6 769.9L729.9 770.1L737.3 770.3L744.7 770.4L752.2 770.4L759.7 770.4L767.1 770.3L774.5 770.1L781.8 769.9L788.9 769.6L795.9 769.3L802.8 768.9L809.4 768.4L815.7 767.9L821.8 767.3L827.6 766.7L833.0 766.0L838.1 765.3L842.9 764.5L847.2 763.7L851.2 762.9L854.7 762.0L857.8 761.1L860.4 760.2L862.6 759.3L864.3 758.3L865.5 757.4L866.3 756.4L866.5 755.4M639.2 768.5L639.4 769.5L640.2 770.4L641.4 771.4L643.0 772.3L645.2 773.3L647.8 774.2L650.8 775.1L654.3 775.9L658.2 776.7L662.5 777.5L667.2 778.3L672.3 779.0L677.7 779.7L683.4 780.3L689.4 780.8L695.7 781.3L702.2 781.8L709.0 782.2L715.9 782.5L723.0 782.8L730.2 783.0L737.4 783.2L744.8 783.3L752.2 783.3L759.6 783.3L767.0 783.2L774.2 783.0L781.4 782.8L788.5 782.5L795.4 782.2L802.2 781.8L808.7 781.3L815.0 780.8L821.0 780.3L826.7 779.7L832.1 779.0L837.2 778.3L841.9 777.5L846.2 776.7L850.1 775.9L853.6 775.1L856.6 774.2L859.2 773.3L861.4 772.3L863.0 771.4L864.2 770.4L865.0 769.5L865.2 768.5M642.7 774.5L642.9 775.4L643.6 776.4L644.8 777.3L646.4 778.2L648.5 779.1L651.0 780.0L654.0 780.9L657.4 781.7L661.1 782.5L665.3 783.2L669.9 784.0L674.8 784.7L680.0 785.3L685.5 785.9L691.4 786.5L697.4 786.9L703.8 787.4L710.3 787.8L717.0 788.1L723.9 788.4L730.8 788.6L737.9 788.7L745.0 788.8L752.2 788.9L759.4 788.8L766.5 788.7L773.6 788.6L780.5 788.4L787.4 788.1L794.1 787.8L800.6 787.4L807.0 786.9L813.0 786.5L818.9 785.9L824.4 785.3L829.6 784.7L834.5 784.0L839.1 783.2L843.3 782.5L847.0 781.7L850.4 780.9L853.4 780.0L855.9 779.1L858.0 778.2L859.6 777.3L860.8 776.4L861.5 775.4L861.7 774.5M647.8 780.0L648.0 780.9L648.7 781.8L649.8 782.7L651.4 783.5L653.4 784.4L655.8 785.2L658.6 786.1L661.8 786.8L665.4 787.6L669.4 788.3L673.7 789.0L678.4 789.7L683.4 790.3L688.7 790.9L694.2 791.4L700.0 791.9L706.0 792.3L712.3 792.7L718.6 793.0L725.2 793.2L731.8 793.4L738.6 793.6L745.4 793.7L752.2 793.7L759.0 793.7L765.8 793.6L772.6 793.4L779.2 793.2L785.8 793.0L792.1 792.7L798.4 792.3L804.4 791.9L810.2 791.4L815.7 790.9L821.0 790.3L826.0 789.7L830.7 789.0L835.0 788.3L839.0 787.6L842.6 786.8L845.8 786.1L848.6 785.2L851.0 784.4L853.0 783.5L854.6 782.7L855.7 781.8L856.4 780.9L856.6 780.0M654.1 785.0L654.3 785.8L654.9 786.7L656.0 787.5L657.4 788.3L659.3 789.1L661.6 789.9L664.2 790.7L667.2 791.4L670.6 792.2L674.4 792.8L678.4 793.5L682.8 794.1L687.5 794.7L692.5 795.2L697.7 795.7L703.1 796.2L708.8 796.5L714.7 796.9L720.7 797.2L726.8 797.4L733.1 797.6L739.4 797.8L745.8 797.8L752.2 797.9L758.6 797.8L765.0 797.8L771.3 797.6L777.6 797.4L783.7 797.2L789.7 796.9L795.6 796.5L801.3 796.2L806.7 795.7L811.9 795.2L816.9 794.7L821.6 794.1L826.0 793.5L830.0 792.8L833.8 792.2L837.2 791.4L840.2 790.7L842.8 789.9L845.1 789.1L847.0 788.3L848.4 787.5L849.5 786.7L850.1 785.8L850.3 785.0" stroke="#0a0404" stroke-width="1.72" fill="none"/>
<path d="M661.7 789.0L661.7 800.0M661.8 789.7L661.8 801.0M662.3 790.4L662.3 802.1M663.0 791.0L663.0 803.1M664.0 791.7L664.0 804.1M665.2 792.3L665.2 805.1M666.8 793.0L666.8 806.1M668.6 793.6L668.6 807.1M670.7 794.2L670.7 808.0M673.0 794.8L673.0 808.9M675.6 795.4L675.6 809.8M678.4 796.0L678.4 810.7M681.4 796.5L681.4 811.5M684.7 797.0L684.7 812.3M688.2 797.5L688.2 813.1M691.9 798.0L691.9 813.8M695.8 798.4L695.8 814.5M699.8 798.8L699.8 815.1M704.1 799.2L704.1 815.7M708.4 799.6L708.4 816.2M712.9 799.9L712.9 816.7M717.6 800.2L717.6 817.1M722.3 800.4L722.3 817.5M727.1 800.6L727.1 817.8M732.1 800.8L732.1 818.0M737.0 800.9L737.0 818.2M742.1 801.0L742.1 818.4M747.1 801.1L747.1 818.5M752.2 801.1L752.2 818.5M757.3 801.1L757.3 818.5M762.3 801.0L762.3 818.4M767.4 800.9L767.4 818.2M772.3 800.8L772.3 818.0M777.3 800.6L777.3 817.8M782.1 800.4L782.1 817.5M786.8 800.2L786.8 817.1M791.5 799.9L791.5 816.7M796.0 799.6L796.0 816.2M800.3 799.2L800.3 815.7M804.6 798.8L804.6 815.1M808.6 798.4L808.6 814.5M812.5 798.0L812.5 813.8M816.2 797.5L816.2 813.1M819.7 797.0L819.7 812.3M823.0 796.5L823.0 811.5M826.0 796.0L826.0 810.7M828.8 795.4L828.8 809.8M831.4 794.8L831.4 808.9M833.7 794.2L833.7 808.0M835.8 793.6L835.8 807.1M837.6 793.0L837.6 806.1M839.2 792.3L839.2 805.1M840.4 791.7L840.4 804.1M841.4 791.0L841.4 803.1M842.1 790.4L842.1 802.1M842.6 789.7L842.6 801.0M842.7 789.0L842.7 800.0M661.7 792.6L661.9 793.6L662.5 794.5L663.4 795.4L664.8 796.3L666.5 797.2L668.6 798.1L671.0 798.9L673.8 799.7L677.0 800.5L680.4 801.3L684.2 802.0L688.2 802.7L692.5 803.3L697.1 803.9L701.9 804.4L707.0 804.9L712.2 805.4L717.6 805.7L723.1 806.1L728.8 806.3L734.5 806.6L740.4 806.7L746.3 806.8L752.2 806.8L758.1 806.8L764.0 806.7L769.9 806.6L775.6 806.3L781.3 806.1L786.8 805.7L792.2 805.4L797.5 804.9L802.5 804.4L807.3 803.9L811.9 803.3L816.2 802.7L820.2 802.0L824.0 801.3L827.4 800.5L830.6 799.7L833.4 798.9L835.8 798.1L837.9 797.2L839.6 796.3L841.0 795.4L841.9 794.5L842.5 793.6L842.7 792.6M661.7 796.3L661.9 797.3L662.5 798.4L663.4 799.4L664.8 800.5L666.5 801.5L668.6 802.5L671.0 803.5L673.8 804.4L677.0 805.3L680.4 806.2L684.2 807.0L688.2 807.8L692.5 808.5L697.1 809.2L701.9 809.8L707.0 810.4L712.2 810.9L717.6 811.3L723.1 811.7L728.8 812.0L734.5 812.3L740.4 812.4L746.3 812.5L752.2 812.6L758.1 812.5L764.0 812.4L769.9 812.3L775.6 812.0L781.3 811.7L786.8 811.3L792.2 810.9L797.5 810.4L802.5 809.8L807.3 809.2L811.9 808.5L816.2 807.8L820.2 807.0L824.0 806.2L827.4 805.3L830.6 804.4L833.4 803.5L835.8 802.5L837.9 801.5L839.6 800.5L841.0 799.4L841.9 798.4L842.5 797.3L842.7 796.3" stroke="#0a0404" stroke-width="1.7" fill="none"/>
<path d="M660.2 789.0L660.4 789.8L661.0 790.6L662.0 791.4L663.3 792.1L665.1 792.9L667.2 793.6L669.7 794.3L672.5 795.0L675.7 795.7L679.2 796.3L683.0 797.0L687.1 797.5L691.5 798.1L696.2 798.6L701.1 799.0L706.2 799.5L711.5 799.8L717.0 800.2L722.6 800.4L728.4 800.7L734.3 800.8L740.2 801.0L746.2 801.0L752.2 801.1L758.2 801.0L764.2 801.0L770.1 800.8L776.0 800.7L781.8 800.4L787.4 800.2L792.9 799.8L798.2 799.5L803.3 799.0L808.2 798.6L812.9 798.1L817.3 797.5L821.4 797.0L825.2 796.3L828.7 795.7L831.9 795.0L834.7 794.3L837.2 793.6L839.3 792.9L841.1 792.1L842.4 791.4L843.4 790.6L844.0 789.8L844.2 789.0" stroke="#050202" stroke-width="2.6" fill="none"/>
</g>
<path d="M674.5 400.0 L671.2 403.0 L668.0 406.0 L665.0 409.0 L662.2 412.0 L659.5 415.0 L657.0 418.0 L654.7 421.0 L652.5 424.0 L650.4 427.0 L648.5 430.0 L646.8 433.0 L645.2 436.0 L643.8 439.0 L642.5 442.0 L641.4 445.0 L640.4 448.0 L639.6 451.0 L638.9 454.0 L638.5 457.0 L638.1 460.0 L637.9 463.0 L637.9 465.0 L637.9 485.0 L637.9 505.0 L637.9 525.0 L637.9 545.0 L637.9 565.0 L637.9 585.0 L637.9 605.0 L637.9 625.0 L637.9 645.0 L637.9 665.0 L637.9 685.0 L637.9 705.0 L637.9 725.0 L637.9 745.0 L637.9 762.0 L638.0 764.0 L638.2 765.0 L638.4 766.0 L639.0 768.0 L639.9 770.0 L641.0 772.0 L642.3 774.0 L643.9 776.0 L645.7 778.0 L647.8 780.0 L650.1 782.0 L652.7 784.0 L655.5 786.0 L658.6 788.0 L661.7 789.0 L661.7 800.0 L661.7 800.0 L661.9 801.2 L662.5 802.4 L663.4 803.6 L664.8 804.8 L666.5 805.9 L668.6 807.1 L671.0 808.2 L673.8 809.2 L677.0 810.3 L680.4 811.3 L684.2 812.2 L688.2 813.1 L692.5 813.9 L697.1 814.7 L701.9 815.4 L707.0 816.0 L712.2 816.6 L717.6 817.1 L723.1 817.5 L728.8 817.9 L734.5 818.1 L740.4 818.3 L746.3 818.5 L752.2 818.5 L758.1 818.5 L764.0 818.3 L769.9 818.1 L775.6 817.9 L781.3 817.5 L786.8 817.1 L792.2 816.6 L797.5 816.0 L802.5 815.4 L807.3 814.7 L811.9 813.9 L816.2 813.1 L820.2 812.2 L824.0 811.3 L827.4 810.3 L830.6 809.2 L833.4 808.2 L835.8 807.1 L837.9 805.9 L839.6 804.8 L841.0 803.6 L841.9 802.4 L842.5 801.2 L842.7 800.0 L842.7 789.0 L844.2 789.0 L845.8 788.0 L848.9 786.0 L851.7 784.0 L854.3 782.0 L856.6 780.0 L858.7 778.0 L860.5 776.0 L862.1 774.0 L863.4 772.0 L864.5 770.0 L865.4 768.0 L866.0 766.0 L866.2 765.0 L866.4 764.0 L866.5 762.0 L866.5 745.0 L866.5 725.0 L866.5 705.0 L866.5 685.0 L866.5 665.0 L866.5 645.0 L866.5 625.0 L866.5 605.0 L866.5 585.0 L866.5 565.0 L866.5 545.0 L866.5 525.0 L866.5 505.0 L866.5 485.0 L866.5 465.0 L866.5 463.0 L866.3 460.0 L865.9 457.0 L865.5 454.0 L864.8 451.0 L864.0 448.0 L863.0 445.0 L861.9 442.0 L860.6 439.0 L859.2 436.0 L857.6 433.0 L855.9 430.0 L854.0 427.0 L851.9 424.0 L849.7 421.0 L847.4 418.0 L844.9 415.0 L842.2 412.0 L839.4 409.0 L836.4 406.0 L833.2 403.0 L829.9 400.0 Z" stroke="#050505" stroke-width="1.6" fill="none"/>
<polygon points="545,415 873,456 978,368 900,420 600,420" fill="#222" opacity="0.35" filter="url(#blur8)"/>
<polygon points="544.4,394.2 872.3,435.1 872.3,454.4 544.4,413.5" fill="#2f7b4e"/>
<polygon points="872.3,435.1 977.0,347.6 977.0,366.9 872.3,454.4" fill="#3f7556"/>
<polygon points="544.4,394.2 872.3,435.1 977.0,347.6 649.0,306.7" fill="#a3dfb9"/>
<path d="M544.4 394.2L649.0 306.7M544.4 394.2L872.3 435.1M544.4 394.2L544.4 413.5M872.3 435.1L872.3 454.4M591.2 400.1L695.9 312.6M559.4 381.7L887.3 422.6M591.2 400.1L591.2 419.4M887.3 422.6L887.3 441.9M638.1 405.9L742.8 318.4M574.3 369.2L902.2 410.1M638.1 405.9L638.1 425.2M902.2 410.1L902.2 429.4M685.0 411.8L789.6 324.2M589.2 356.7L917.2 397.6M685.0 411.8L685.0 431.1M917.2 397.6L917.2 416.9M731.8 417.6L836.4 330.1M604.2 344.2L932.1 385.1M731.8 417.6L731.8 436.9M932.1 385.1L932.1 404.4M778.6 423.4L883.3 335.9M619.1 331.7L947.1 372.6M778.6 423.4L778.6 442.8M947.1 372.6L947.1 391.9M825.5 429.3L930.1 341.8M634.1 319.2L962.0 360.1M825.5 429.3L825.5 448.6M962.0 360.1L962.0 379.4M872.3 435.1L977.0 347.6M649.0 306.7L977.0 347.6M872.3 435.1L872.3 454.4M977.0 347.6L977.0 366.9M544.4 413.5L872.3 454.4L977.0 366.9" stroke="#0a0a0a" stroke-width="1.5" fill="none" stroke-linecap="square"/>
</svg>
<div class="b" style="left:1px;top:107px;width:346px;height:16px;background:#f0f0f0;box-shadow:0 1px 0 #9a9a9a;clip-path:polygon(0 0,338px 0,346px 7px,346px 16px,0 16px)"></div>
<svg class="b" style="left:332px;top:109px;" width="10" height="12" viewBox="0 0 10 12"><path d="M7 2 L3 6 L7 10" fill="none" stroke="#4b5a72" stroke-width="1.3"/></svg>
<div class="b" style="left:347px;top:106px;width:1.5px;height:30px;background:#7d7d7d"></div>
<div class="b" style="left:351px;top:106px;width:1.5px;height:30px;background:#7d7d7d"></div>
<div class="b" style="left:1px;top:1060px;width:345px;height:17px;background:#2d2d2d"></div>
<div class="b" style="left:17px;top:1064px;width:200px;height:10px;background:#888;box-sizing:border-box;border:1px solid #eee"></div>
<div class="b" style="left:220px;top:1066px;width:110px;height:5px;background:#6e6e6e"></div>
<div class="b" style="left:347px;top:1048px;width:1.5px;height:30px;background:#7d7d7d"></div>
<div class="b" style="left:351px;top:1048px;width:1.5px;height:30px;background:#7d7d7d"></div>
<svg class="b" style="left:0;top:0" width="0" height="0"><defs><linearGradient id="expg" x1="0" y1="0" x2="0" y2="1"><stop offset="0" stop-color="#3c3c3c"/><stop offset="0.5" stop-color="#3e3e3e"/><stop offset="1" stop-color="#5e5e5e"/></linearGradient></defs></svg>
<div class="b" style="left:15.8px;top:147px;width:1.3px;height:231px;background:#8f8f8f"></div>
<div class="b" style="left:21px;top:163.9px;width:6px;height:1.3px;background:#8f8f8f"></div>
<div class="b" style="left:34.9px;top:172px;width:1.3px;height:13px;background:#8f8f8f"></div>
<div class="b" style="left:40.5px;top:190.9px;width:7px;height:1.3px;background:#8f8f8f"></div>
<div class="b" style="left:53.8px;top:198px;width:1.3px;height:101px;background:#8f8f8f"></div>
<div class="b" style="left:60px;top:217.4px;width:6px;height:1.3px;background:#8f8f8f"></div>
<div class="b" style="left:60px;top:244.2px;width:6px;height:1.3px;background:#8f8f8f"></div>
<div class="b" style="left:60px;top:271px;width:6px;height:1.3px;background:#8f8f8f"></div>
<div class="b" style="left:60px;top:297.8px;width:6px;height:1.3px;background:#8f8f8f"></div>
<div class="b" style="left:21px;top:324.6px;width:6px;height:1.3px;background:#8f8f8f"></div>
<div class="b" style="left:34.9px;top:332px;width:1.3px;height:19px;background:#8f8f8f"></div>
<div class="b" style="left:34.9px;top:350.5px;width:11px;height:1.3px;background:#8f8f8f"></div>
<div class="b" style="left:21px;top:378px;width:6px;height:1.3px;background:#8f8f8f"></div>
<svg class="b" style="left:9px;top:158px;" width="13" height="13" viewBox="0 0 13 13"><rect x="0.5" y="0.5" width="12" height="12" rx="2.5" fill="url(#expg)" stroke="#8a8a8a" stroke-width="1"/><path d="M3 6.5H10" stroke="#f4f4f4" stroke-width="1.3"/></svg>
<svg class="b" style="left:28px;top:185px;" width="13" height="13" viewBox="0 0 13 13"><rect x="0.5" y="0.5" width="12" height="12" rx="2.5" fill="url(#expg)" stroke="#8a8a8a" stroke-width="1"/><path d="M3 6.5H10" stroke="#f4f4f4" stroke-width="1.3"/></svg>
<svg class="b" style="left:47px;top:211px;" width="13" height="13" viewBox="0 0 13 13"><rect x="0.5" y="0.5" width="12" height="12" rx="2.5" fill="url(#expg)" stroke="#8a8a8a" stroke-width="1"/><path d="M3 6.5H10M6.5 3V10" stroke="#f4f4f4" stroke-width="1.3"/></svg>
<svg class="b" style="left:47px;top:238px;" width="13" height="13" viewBox="0 0 13 13"><rect x="0.5" y="0.5" width="12" height="12" rx="2.5" fill="url(#expg)" stroke="#8a8a8a" stroke-width="1"/><path d="M3 6.5H10M6.5 3V10" stroke="#f4f4f4" stroke-width="1.3"/></svg>
<svg class="b" style="left:47px;top:264.8px;" width="13" height="13" viewBox="0 0 13 13"><rect x="0.5" y="0.5" width="12" height="12" rx="2.5" fill="url(#expg)" stroke="#8a8a8a" stroke-width="1"/><path d="M3 6.5H10M6.5 3V10" stroke="#f4f4f4" stroke-width="1.3"/></svg>
<svg class="b" style="left:47px;top:291.6px;" width="13" height="13" viewBox="0 0 13 13"><rect x="0.5" y="0.5" width="12" height="12" rx="2.5" fill="url(#expg)" stroke="#8a8a8a" stroke-width="1"/><path d="M3 6.5H10M6.5 3V10" stroke="#f4f4f4" stroke-width="1.3"/></svg>
<svg class="b" style="left:9px;top:318.8px;" width="13" height="13" viewBox="0 0 13 13"><rect x="0.5" y="0.5" width="12" height="12" rx="2.5" fill="url(#expg)" stroke="#8a8a8a" stroke-width="1"/><path d="M3 6.5H10" stroke="#f4f4f4" stroke-width="1.3"/></svg>
<svg class="b" style="left:9px;top:372.2px;" width="13" height="13" viewBox="0 0 13 13"><rect x="0.5" y="0.5" width="12" height="12" rx="2.5" fill="url(#expg)" stroke="#8a8a8a" stroke-width="1"/><path d="M3 6.5H10M6.5 3V10" stroke="#f4f4f4" stroke-width="1.3"/></svg>
<svg class="b" style="left:8px;top:126.5px;" width="22" height="22" viewBox="0 0 22 22"><defs><linearGradient id="gearg" x1="0" y1="0" x2="0" y2="1"><stop offset="0" stop-color="#ff5a20"/><stop offset="0.3" stop-color="#e8e020"/><stop offset="0.55" stop-color="#30d040"/><stop offset="1" stop-color="#10a0e0"/></linearGradient></defs><polygon points="11.98,1.05 13.90,1.43 14.39,4.65 15.57,5.43 18.73,4.66 19.82,6.29 17.89,8.91 18.17,10.29 20.95,11.98 20.57,13.90 17.35,14.39 16.57,15.57 17.34,18.73 15.71,19.82 13.09,17.89 11.71,18.17 10.02,20.95 8.10,20.57 7.61,17.35 6.43,16.57 3.27,17.34 2.18,15.71 4.11,13.09 3.83,11.71 1.05,10.02 1.43,8.10 4.65,7.61 5.43,6.43 4.66,3.27 6.29,2.18 8.91,4.11 10.29,3.83" fill="url(#gearg)"/><circle cx="11" cy="11" r="3.6" fill="#333"/></svg>
<svg class="b" style="left:27px;top:153px;" width="23" height="21" viewBox="0 0 23 21"><defs><linearGradient id="mdg" x1="0" y1="0" x2="0" y2="1"><stop offset="0" stop-color="#0a50f0"/><stop offset="0.5" stop-color="#e8f4ff"/><stop offset="1" stop-color="#0038e0"/></linearGradient></defs><rect x="0" y="0" width="18" height="15" fill="url(#mdg)"/><circle cx="15" cy="12.3" r="6" fill="#fff" stroke="#f59a00" stroke-width="2"/><path d="M12.5 8.8L19 12.3L12.5 15.8Z" fill="#2a5cb0"/></svg>
<svg class="b" style="left:49px;top:180px;" width="20" height="19" viewBox="0 0 20 19"><path d="M1 5L9 1L17 4V14L9 18L1 14Z" fill="#e6e6e6" stroke="#bcbcbc" stroke-width="0.8"/><path d="M5 5L11 2.5L16 5V11L10 13L5 11Z" fill="#5aa0c8" stroke="#2d6a8e" stroke-width="0.8"/><path d="M5 5L10 7.3L16 5M10 7.3V13" stroke="#2d6a8e" stroke-width="0.8" fill="none"/><circle cx="17" cy="3" r="1.8" fill="none" stroke="#10e010" stroke-width="1.3"/><path d="M17 4.5V11M17 8H18.5M17 10H18.5" stroke="#10e010" stroke-width="1.4"/></svg>
<svg class="b" style="left:67px;top:208px;" width="18" height="19" viewBox="0 0 18 19"><path d="M5 2L14 0.5L15.5 10L6 11.5Z" fill="#3b8ab0"/><path d="M1 12.5L6 11.5L15.5 10L17.5 15L5 18Z" fill="#2c6f93"/><rect x="6.5" y="2.0" width="2" height="1.8" fill="#8fd0ef"/><rect x="6.3" y="4.3" width="2" height="1.8" fill="#8fd0ef"/><rect x="6.1" y="6.6" width="2" height="1.8" fill="#8fd0ef"/><rect x="5.9" y="8.9" width="2" height="1.8" fill="#8fd0ef"/><rect x="9.3" y="2.0" width="2" height="1.8" fill="#8fd0ef"/><rect x="9.1" y="4.3" width="2" height="1.8" fill="#8fd0ef"/><rect x="8.9" y="6.6" width="2" height="1.8" fill="#8fd0ef"/><rect x="8.7" y="8.9" width="2" height="1.8" fill="#8fd0ef"/><rect x="12.1" y="2.0" width="2" height="1.8" fill="#8fd0ef"/><rect x="11.9" y="4.3" width="2" height="1.8" fill="#8fd0ef"/><rect x="11.7" y="6.6" width="2" height="1.8" fill="#8fd0ef"/><rect x="11.5" y="8.9" width="2" height="1.8" fill="#8fd0ef"/><rect x="4.0" y="12.3" width="2.2" height="1.5" fill="#7fc0e0"/><rect x="5.5" y="14.7" width="2.2" height="1.5" fill="#7fc0e0"/><rect x="7.0" y="12.3" width="2.2" height="1.5" fill="#7fc0e0"/><rect x="8.5" y="14.7" width="2.2" height="1.5" fill="#7fc0e0"/><rect x="10.0" y="12.3" width="2.2" height="1.5" fill="#7fc0e0"/><rect x="11.5" y="14.7" width="2.2" height="1.5" fill="#7fc0e0"/><rect x="13.0" y="12.3" width="2.2" height="1.5" fill="#7fc0e0"/><rect x="14.5" y="14.7" width="2.2" height="1.5" fill="#7fc0e0"/></svg>
<svg class="b" style="left:65px;top:232px;" width="22" height="22" viewBox="0 0 22 22"><rect x="0" y="0" width="22" height="22" fill="#4a4a4a"/><path d="M4 8L9 5L12 6.5V12L18 10V17L10 21L4 18Z" fill="#2f5566" stroke="#14262e" stroke-width="0.8"/><path d="M4 8L7 9.5V20M7 9.5L12 6.5M7 14L12 12L18 14M12 12V6.5" stroke="#5d8899" stroke-width="0.7" fill="none"/><circle cx="12.5" cy="3.3" r="1.9" fill="none" stroke="#10d010" stroke-width="1.3"/><path d="M12.5 5V12" stroke="#10d010" stroke-width="1.5"/><circle cx="18.5" cy="7" r="1.9" fill="none" stroke="#10d010" stroke-width="1.3"/><path d="M18.5 8.7V14" stroke="#10d010" stroke-width="1.5"/></svg>
<svg class="b" style="left:65px;top:258.8px;" width="22" height="22" viewBox="0 0 22 22"><rect x="0" y="0" width="22" height="22" fill="#4a4a4a"/><path d="M4 8L9 5L12 6.5V12L18 10V17L10 21L4 18Z" fill="#2f5566" stroke="#14262e" stroke-width="0.8"/><path d="M4 8L7 9.5V20M7 9.5L12 6.5M7 14L12 12L18 14M12 12V6.5" stroke="#5d8899" stroke-width="0.7" fill="none"/><circle cx="12.5" cy="3.3" r="1.9" fill="none" stroke="#10d010" stroke-width="1.3"/><path d="M12.5 5V12" stroke="#10d010" stroke-width="1.5"/><circle cx="18.5" cy="7" r="1.9" fill="none" stroke="#10d010" stroke-width="1.3"/><path d="M18.5 8.7V14" stroke="#10d010" stroke-width="1.5"/><path d="M12 21V16.5L17 15M12 16.5L9 19" stroke="#c8b400" stroke-width="1.4" fill="none"/></svg>
<svg class="b" style="left:65px;top:285.6px;" width="22" height="22" viewBox="0 0 22 22"><rect x="0" y="0" width="22" height="22" fill="#4a4a4a"/><path d="M4 8L9 5L12 6.5V12L18 10V17L10 21L4 18Z" fill="#2f5566" stroke="#14262e" stroke-width="0.8"/><path d="M4 8L7 9.5V20M7 9.5L12 6.5M7 14L12 12L18 14M12 12V6.5" stroke="#5d8899" stroke-width="0.7" fill="none"/><circle cx="12.5" cy="3.3" r="1.9" fill="none" stroke="#10d010" stroke-width="1.3"/><path d="M12.5 5V12" stroke="#10d010" stroke-width="1.5"/><circle cx="18.5" cy="7" r="1.9" fill="none" stroke="#10d010" stroke-width="1.3"/><path d="M18.5 8.7V14" stroke="#10d010" stroke-width="1.5"/></svg>
<svg class="b" style="left:27px;top:312.5px;" width="22" height="19" viewBox="0 0 22 19"><path d="M14 1L16 1L16.5 3.5L18.5 2.5L20 4L19 6L21.5 7V9L19 10L20 12L18.5 13.5L16.5 12.5L16 15H14Z" fill="#f0c020"/><circle cx="14.5" cy="8" r="4.5" fill="#1040d0"/><circle cx="14.5" cy="8" r="2.4" fill="#333"/><rect x="1" y="2" width="4" height="3" fill="#c8c8d8"/><rect x="1" y="8" width="4" height="3" fill="#c8c8d8"/><rect x="1" y="14" width="4" height="3" fill="#c8c8d8"/><path d="M6 3.5H12M6 9.5H11M6 15.5H12" stroke="#2060f0" stroke-width="1.6"/></svg>
<svg class="b" style="left:46px;top:340px;" width="20" height="21" viewBox="0 0 20 21"><path d="M6 6L12 3L17 5V14L11 17L6 15Z" fill="#f0f0f0" stroke="#a8a8a8" stroke-width="0.8"/><path d="M8 8L12 9.5L17 7.5" stroke="#b0b0b0" fill="none" stroke-width="0.8"/><path d="M14 0V8M11.5 5.5L14 8.5L16.5 5.5" stroke="#2a7ab8" stroke-width="2" fill="none"/><circle cx="5" cy="16" r="4" fill="none" stroke="#e8e010" stroke-width="1.6"/><circle cx="5.5" cy="16" r="1.8" fill="none" stroke="#1a50c0" stroke-width="1.2"/></svg>
<svg class="b" style="left:27px;top:365px;" width="22" height="22" viewBox="0 0 22 22"><rect x="0" y="0" width="22" height="22" fill="#505050"/><path d="M9 7H20M9 11H20M9 15H20M12 4V20M16 4V20" stroke="#6a6a6a" stroke-width="1"/><rect x="1" y="1" width="3.5" height="19" fill="#2050c0"/><rect x="4.5" y="9" width="4" height="11" fill="#e0b030"/><rect x="8.5" y="14" width="4" height="7" fill="#c02020"/></svg>
<div class="b" style="left:57px;top:154.5px;width:40px;height:19.5px;background:#0a62f2;box-sizing:border-box;border:1px solid #b8bcc4;border-right-color:#505050;border-bottom-color:#505050"></div>
<div class="b" style="left:95px;top:208px;width:80.5px;height:19.5px;background:#0a62f2;box-sizing:border-box;border:1px solid #b8bcc4;border-right-color:#505050;border-bottom-color:#505050"></div>
<div class="b" style="left:77.5px;top:356.8px;width:59px;height:1.3px;background:#d8d8d8"></div>
<svg class="b" style="left:0;top:0" width="0" height="0"><defs><linearGradient id="arrg" x1="0" y1="0" x2="0" y2="1"><stop offset="0" stop-color="#8fd0f0"/><stop offset="1" stop-color="#3a7fa5"/></linearGradient><linearGradient id="wing" x1="0" y1="0" x2="1" y2="1"><stop offset="0" stop-color="#ffffff"/><stop offset="1" stop-color="#d4d4d4"/></linearGradient><linearGradient id="selb" x1="0" y1="0" x2="0" y2="1"><stop offset="0" stop-color="#e8e8e8"/><stop offset="1" stop-color="#b8b8b8"/></linearGradient></defs></svg>
<div class="b" style="left:1103px;top:144px;width:588px;height:504px;background:#f2f2f2;border-radius:3px 3px 0 0;box-sizing:border-box;border:1px solid #c4c8cc"></div>
<div class="b" style="left:1205px;top:144px;width:485px;height:22.5px;background:#d3d6d8;border-top-right-radius:3px"></div>
<div class="b" style="left:1205px;top:166px;width:485px;height:1px;background:#bcc0c3"></div>
<div class="b" style="left:1205px;top:144px;width:1px;height:23px;background:#c4c7ca"></div>
<svg class="b" style="left:1673px;top:149px;" width="12" height="12" viewBox="0 0 12 12"><path d="M1 1L11 11M11 1L1 11" stroke="#5a5a5a" stroke-width="1.6"/></svg>
<svg class="b" style="left:1116px;top:186px;" width="20" height="16" viewBox="0 0 20 16"><path d="M2 8.5L6.5 13L17 2" fill="none" stroke="#3ea640" stroke-width="2.6"/></svg>
<div class="b" style="left:1268.5px;top:188px;width:2.4px;height:8.3px;background:#e0180c"></div>
<div class="b" style="left:1268.5px;top:198px;width:2.4px;height:2.4px;background:#e0180c"></div>
<svg class="b" style="left:1401px;top:179.5px;" width="27" height="27" viewBox="0 0 27 27"><path d="M4.5 10.5A9.2 9.2 0 0 1 20.3 7.2" fill="none" stroke="#1d4a68" stroke-width="5.4"/><path d="M22.5 16.5A9.2 9.2 0 0 1 6.7 19.8" fill="none" stroke="#1d4a68" stroke-width="5.4"/><path d="M15.5 11.2H24.2V2.5Z" fill="#4e98c0" stroke="#1d4a68" stroke-width="1" stroke-linejoin="round"/><path d="M11.5 15.8H2.8V24.5Z" fill="#4e98c0" stroke="#1d4a68" stroke-width="1" stroke-linejoin="round"/><path d="M4.5 10.5A9.2 9.2 0 0 1 20.3 7.2" fill="none" stroke="#7cc4e8" stroke-width="3.4"/><path d="M22.5 16.5A9.2 9.2 0 0 1 6.7 19.8" fill="none" stroke="#5aa6cc" stroke-width="3.4"/><path d="M8.5 15L11.5 18L18 11.5" fill="none" stroke="#222" stroke-width="2.2"/></svg>
<svg class="b" style="left:1437px;top:179.5px;" width="27" height="27" viewBox="0 0 27 27"><path d="M4.5 10.5A9.2 9.2 0 0 1 20.3 7.2" fill="none" stroke="#1d4a68" stroke-width="5.4"/><path d="M22.5 16.5A9.2 9.2 0 0 1 6.7 19.8" fill="none" stroke="#1d4a68" stroke-width="5.4"/><path d="M15.5 11.2H24.2V2.5Z" fill="#4e98c0" stroke="#1d4a68" stroke-width="1" stroke-linejoin="round"/><path d="M11.5 15.8H2.8V24.5Z" fill="#4e98c0" stroke="#1d4a68" stroke-width="1" stroke-linejoin="round"/><path d="M4.5 10.5A9.2 9.2 0 0 1 20.3 7.2" fill="none" stroke="#7cc4e8" stroke-width="3.4"/><path d="M22.5 16.5A9.2 9.2 0 0 1 6.7 19.8" fill="none" stroke="#5aa6cc" stroke-width="3.4"/><path d="M6.5 10L9.5 13L15 7.5M10.5 15.5L13.5 18.5L19.5 12.5" fill="none" stroke="#222" stroke-width="2"/></svg>
<svg class="b" style="left:1473px;top:179.5px;" width="27" height="27" viewBox="0 0 27 27"><path d="M4.5 10.5A9.2 9.2 0 0 1 20.3 7.2" fill="none" stroke="#1d4a68" stroke-width="5.4"/><path d="M22.5 16.5A9.2 9.2 0 0 1 6.7 19.8" fill="none" stroke="#1d4a68" stroke-width="5.4"/><path d="M15.5 11.2H24.2V2.5Z" fill="#4e98c0" stroke="#1d4a68" stroke-width="1" stroke-linejoin="round"/><path d="M11.5 15.8H2.8V24.5Z" fill="#4e98c0" stroke="#1d4a68" stroke-width="1" stroke-linejoin="round"/><path d="M4.5 10.5A9.2 9.2 0 0 1 20.3 7.2" fill="none" stroke="#7cc4e8" stroke-width="3.4"/><path d="M22.5 16.5A9.2 9.2 0 0 1 6.7 19.8" fill="none" stroke="#5aa6cc" stroke-width="3.4"/><path d="M9.2 8.5L19.5 13.3L9.2 18.2Z" fill="#222"/></svg>
<svg class="b" style="left:1508px;top:180px;" width="28" height="27" viewBox="0 0 28 27"><rect x="0.7" y="0.7" width="26.6" height="25.2" fill="url(#wing)" stroke="#333" stroke-width="1.2"/><rect x="1.3" y="1.3" width="25.4" height="3.4" fill="#4e93bb"/><path d="M1 5H27" stroke="#333" stroke-width="0.7"/><circle cx="14.0" cy="8.5" r="1.3" fill="#2a6a90" opacity="1"/><circle cx="18.9" cy="10.6" r="1.3" fill="#2a6a90" opacity="0.15"/><circle cx="21.0" cy="15.5" r="1.3" fill="#2a6a90" opacity="0.3"/><circle cx="18.9" cy="20.4" r="1.3" fill="#2a6a90" opacity="0.5"/><circle cx="14.0" cy="22.5" r="1.3" fill="#2a6a90" opacity="0.65"/><circle cx="9.1" cy="20.4" r="1.3" fill="#2a6a90" opacity="0.8"/><circle cx="7.0" cy="15.5" r="1.3" fill="#2a6a90" opacity="0.9"/><circle cx="9.1" cy="10.6" r="1.3" fill="#2a6a90" opacity="0.95"/></svg>
<svg class="b" style="left:1544px;top:180px;" width="28" height="27" viewBox="0 0 28 27"><rect x="0.7" y="0.7" width="26.6" height="25.2" fill="url(#wing)" stroke="#333" stroke-width="1.2"/><rect x="1.3" y="1.3" width="25.4" height="3.4" fill="#4e93bb"/><path d="M1 5H27" stroke="#333" stroke-width="0.7"/><path d="M3.7 9L5.5 11L7.7 8.5M3.7 13.7L5.5 15.7L7.7 13.2M3.7 18.5L5.5 20.5L7.7 18" fill="none" stroke="#30b030" stroke-width="1.2"/><path d="M10.5 9.3H20.5M10.5 14.3H20.5M10.5 19.3H20.5" stroke="#4a4a5a" stroke-width="1.7"/></svg>
<svg class="b" style="left:1580px;top:180px;" width="28" height="27" viewBox="0 0 28 27"><rect x="0.7" y="0.7" width="26.6" height="25.2" fill="url(#wing)" stroke="#333" stroke-width="1.2"/><rect x="1.3" y="1.3" width="25.4" height="3.4" fill="#4e93bb"/><path d="M1 5H27" stroke="#333" stroke-width="0.7"/><g transform="translate(14,15.5) scale(0.95)"><path d="M-8.5 0C-6 -4.5 -3 -5.3 0 -5.3C3 -5.3 6 -4.5 8.5 0C6 4.5 3 5.3 0 5.3C-3 5.3 -6 4.5 -8.5 0Z" fill="#fff" stroke="#222" stroke-width="1.3"/><circle cx="0" cy="-0.3" r="3.7" fill="#1a1a1a"/><circle cx="0.9" cy="-1.4" r="1" fill="#ddd"/></g></svg>
<svg class="b" style="left:1616px;top:180px;" width="28" height="27" viewBox="0 0 28 27"><rect x="0.7" y="0.7" width="26.6" height="25.2" fill="url(#wing)" stroke="#333" stroke-width="1.2"/><rect x="1.3" y="1.3" width="25.4" height="3.4" fill="#4e93bb"/><path d="M1 5H27" stroke="#333" stroke-width="0.7"/><rect x="12.7" y="8" width="2.6" height="9" fill="#b01010"/><rect x="12.7" y="19" width="2.6" height="2.6" fill="#b01010"/></svg>
<svg class="b" style="left:1652.5px;top:179.5px;" width="27" height="27" viewBox="0 0 27 27"><g fill="url(#arrg)" stroke="#1d4a68" stroke-width="0.9" stroke-linejoin="round"><path d="M12 1V5.5C9 6 6.5 8.5 6 11.5H9L4.2 12.3H1.2V8C2 4 6 1.2 12 1Z" transform="translate(0,0)"/><path d="M15 1C19 1.2 24 4 25 9L26.5 11.5H19L21.3 9C20.5 7 18 5.8 15 5.5Z"/><path d="M26 15V19C25 23 21 25.8 15 26V21.5C18 21 20.5 18.5 21 15.5H26Z"/><path d="M12 26C8 25.8 3 23 2 18L0.8 15.5H8L5.7 18C6.5 20 9 21.2 12 21.5Z"/></g></svg>
<svg class="b" style="left:1640px;top:215px;" width="15" height="15" viewBox="0 0 15 15"><path d="M1 1.5H13.5L9 7.5V13.5H5.5V7.5Z" fill="none" stroke="#777" stroke-width="1"/></svg>
<svg class="b" style="left:1661px;top:213px;" width="21" height="21" viewBox="0 0 21 21"><rect x="0.5" y="0.5" width="19.5" height="19.5" fill="#f4f4f4" stroke="#c8c8c8" stroke-width="1"/><rect x="1" y="1" width="3.5" height="19" fill="#4d9ac0"/><path d="M7 4.5H18L14 9.5V16H11V9.5Z" fill="#4d9ac0" stroke="#2a6a90" stroke-width="0.7"/></svg>
<svg class="b" style="left:1121px;top:243px;" width="32" height="22" viewBox="0 0 32 22"><rect x="0.8" y="0.8" width="30.4" height="20.4" rx="3" fill="url(#selb)" stroke="#2a2a2a" stroke-width="1.5"/><path d="M9.50 15.80 L18.16 20.80 L18.16 15.80 L13.83 13.30 L13.83 8.30 L9.50 5.80 Z" fill="#c4c4c4" stroke="#333" stroke-width="1.0" stroke-linejoin="round"/><path d="M23.36 17.80 L18.16 20.80 L18.16 15.80 L23.36 12.80 Z" fill="#d8d8d8" stroke="#333" stroke-width="1.0" stroke-linejoin="round"/><path d="M19.03 10.30 L13.83 13.30 L13.83 8.30 L19.03 5.30 Z" fill="#d8d8d8" stroke="#333" stroke-width="1.0" stroke-linejoin="round"/><path d="M14.70 2.80 L19.03 5.30 L13.83 8.30 L9.50 5.80 Z" fill="#e4e4e4" stroke="#333" stroke-width="1.0" stroke-linejoin="round"/><path d="M19.03 10.30 L23.36 12.80 L18.16 15.80 L13.83 13.30 Z" fill="#e4e4e4" stroke="#333" stroke-width="1.0" stroke-linejoin="round"/></svg>
<svg class="b" style="left:1155px;top:243px;" width="32" height="22" viewBox="0 0 32 22"><rect x="0.5" y="0.5" width="31" height="21" rx="2.5" fill="#f2f2f2" stroke="#d2d2d2" stroke-width="1"/><path d="M9.00 15.98 L17.31 20.78 L17.31 15.98 L13.16 13.58 L13.16 8.78 L9.00 6.38 Z" fill="#e6e6e6" stroke="#555" stroke-width="0.8" stroke-linejoin="round"/><path d="M22.30 17.90 L17.31 20.78 L17.31 15.98 L22.30 13.10 Z" fill="#d0d0d0" stroke="#555" stroke-width="0.8" stroke-linejoin="round"/><path d="M18.14 10.70 L13.16 13.58 L13.16 8.78 L18.14 5.90 Z" fill="#d0d0d0" stroke="#555" stroke-width="0.8" stroke-linejoin="round"/><path d="M13.99 3.50 L18.14 5.90 L13.16 8.78 L9.00 6.38 Z" fill="#fafafa" stroke="#555" stroke-width="0.8" stroke-linejoin="round"/><path d="M18.14 10.70 L22.30 13.10 L17.31 15.98 L13.16 13.58 Z" fill="#fafafa" stroke="#555" stroke-width="0.8" stroke-linejoin="round"/><path d="M17.5 1.5V9.5" stroke="#1f6fb0" stroke-width="2"/><path d="M14.3 7.5H20.7L17.5 11.5Z" fill="#1f6fb0"/><path d="M6 17.5L13 20.5" stroke="#4a90c0" stroke-width="1.4" stroke-dasharray="1 0.8"/></svg>
<svg class="b" style="left:1189px;top:243px;" width="32" height="22" viewBox="0 0 32 22"><rect x="0.5" y="0.5" width="31" height="21" rx="2.5" fill="#f2f2f2" stroke="#d2d2d2" stroke-width="1"/><defs><linearGradient id="rbw" gradientUnits="userSpaceOnUse" x1="0" y1="3" x2="2" y2="19"><stop offset="0" stop-color="#e81818"/><stop offset="0.4" stop-color="#f0e020"/><stop offset="0.7" stop-color="#20c030"/><stop offset="1" stop-color="#1050e0"/></linearGradient></defs><path d="M9.50 15.80 L18.16 20.80 L18.16 15.80 L13.83 13.30 L13.83 8.30 L9.50 5.80 Z" fill="url(#rbw)" stroke="#1a2a1a" stroke-width="0.8" stroke-linejoin="round"/><path d="M23.36 17.80 L18.16 20.80 L18.16 15.80 L23.36 12.80 Z" fill="url(#rbw)" stroke="#1a2a1a" stroke-width="0.8" stroke-linejoin="round"/><path d="M19.03 10.30 L13.83 13.30 L13.83 8.30 L19.03 5.30 Z" fill="url(#rbw)" stroke="#1a2a1a" stroke-width="0.8" stroke-linejoin="round"/><path d="M14.70 2.80 L19.03 5.30 L13.83 8.30 L9.50 5.80 Z" fill="url(#rbw)" stroke="#1a2a1a" stroke-width="0.8" stroke-linejoin="round"/><path d="M19.03 10.30 L23.36 12.80 L18.16 15.80 L13.83 13.30 Z" fill="url(#rbw)" stroke="#1a2a1a" stroke-width="0.8" stroke-linejoin="round"/></svg>
<div class="b" style="left:1119.5px;top:267.8px;width:559px;height:369px;box-sizing:border-box;border:1px solid #8c8c8c;background:#f2f2f2"></div>
<div class="b" style="left:1122px;top:270.5px;width:554px;height:31.5px;background:#f1f1f1"></div>
<div class="b" style="left:1122px;top:301.8px;width:554px;height:1.2px;background:#d4d4d4"></div>
<div class="b" style="left:1151.3px;top:271px;width:1px;height:31px;background:#d4d4d4"></div>
<div class="b" style="left:1351.4px;top:271px;width:1px;height:31px;background:#d4d4d4"></div>
<div class="b" style="left:1481.2px;top:271px;width:1px;height:31px;background:#d4d4d4"></div>
<div class="b" style="left:1122px;top:304.0px;width:29px;height:24.5px;background:#f7f7f7"></div>
<div class="b" style="left:1152.5px;top:304.0px;width:198px;height:24.5px;background:#f7f7f7"></div>
<div class="b" style="left:1352.5px;top:304.0px;width:128px;height:24.5px;background:#f7f7f7"></div>
<div class="b" style="left:1482.5px;top:304.0px;width:193.5px;height:24.5px;background:#f7f7f7"></div>
<svg class="b" style="left:1126.5px;top:304.4px;" width="25" height="24" viewBox="0 0 25 24"><rect x="0.5" y="0.5" width="23.5" height="22.8" rx="3" fill="#f6f6f6" stroke="#bdbdbd" stroke-width="1"/><g transform="translate(12.2,11.4) scale(0.85)"><path d="M-8.5 0C-6 -4.5 -3 -5.3 0 -5.3C3 -5.3 6 -4.5 8.5 0C6 4.5 3 5.3 0 5.3C-3 5.3 -6 4.5 -8.5 0Z" fill="#fff" stroke="#222" stroke-width="1.3"/><circle cx="0" cy="-0.3" r="3.7" fill="#1a1a1a"/><circle cx="0.9" cy="-1.4" r="1" fill="#ddd"/></g></svg>
<div class="b" style="left:1122px;top:330.0px;width:29px;height:24.5px;background:#e7e7e7"></div>
<div class="b" style="left:1152.5px;top:330.0px;width:198px;height:24.5px;background:#e7e7e7"></div>
<div class="b" style="left:1352.5px;top:330.0px;width:128px;height:24.5px;background:#e7e7e7"></div>
<div class="b" style="left:1482.5px;top:330.0px;width:193.5px;height:24.5px;background:#e7e7e7"></div>
<div class="b" style="left:1122px;top:356.0px;width:29px;height:24.5px;background:#f7f7f7"></div>
<div class="b" style="left:1152.5px;top:356.0px;width:198px;height:24.5px;background:#f7f7f7"></div>
<div class="b" style="left:1352.5px;top:356.0px;width:128px;height:24.5px;background:#f7f7f7"></div>
<div class="b" style="left:1482.5px;top:356.0px;width:193.5px;height:24.5px;background:#f7f7f7"></div>
<svg class="b" style="left:1126.5px;top:356.4px;" width="25" height="24" viewBox="0 0 25 24"><rect x="0.5" y="0.5" width="23.5" height="22.8" rx="3" fill="#f6f6f6" stroke="#bdbdbd" stroke-width="1"/><g transform="translate(12.2,11.4) scale(0.85)"><path d="M-8.5 0C-6 -4.5 -3 -5.3 0 -5.3C3 -5.3 6 -4.5 8.5 0C6 4.5 3 5.3 0 5.3C-3 5.3 -6 4.5 -8.5 0Z" fill="#fff" stroke="#222" stroke-width="1.3"/><circle cx="0" cy="-0.3" r="3.7" fill="#1a1a1a"/><circle cx="0.9" cy="-1.4" r="1" fill="#ddd"/></g></svg>
<div class="b" style="left:1122px;top:382.0px;width:29px;height:24.5px;background:#e7e7e7"></div>
<div class="b" style="left:1152.5px;top:382.0px;width:198px;height:24.5px;background:#e7e7e7"></div>
<div class="b" style="left:1352.5px;top:382.0px;width:128px;height:24.5px;background:#e7e7e7"></div>
<div class="b" style="left:1482.5px;top:382.0px;width:193.5px;height:24.5px;background:#e7e7e7"></div>
<svg class="b" style="left:1126.5px;top:382.4px;" width="25" height="24" viewBox="0 0 25 24"><rect x="0.5" y="0.5" width="23.5" height="22.8" rx="3" fill="#f6f6f6" stroke="#bdbdbd" stroke-width="1"/><g transform="translate(12.2,11.4) scale(0.85)"><path d="M-8.5 0C-6 -4.5 -3 -5.3 0 -5.3C3 -5.3 6 -4.5 8.5 0C6 4.5 3 5.3 0 5.3C-3 5.3 -6 4.5 -8.5 0Z" fill="#fff" stroke="#222" stroke-width="1.3"/><circle cx="0" cy="-0.3" r="3.7" fill="#1a1a1a"/><circle cx="0.9" cy="-1.4" r="1" fill="#ddd"/></g></svg>
<div class="b" style="left:1122px;top:408.0px;width:29px;height:24.5px;background:#f7f7f7"></div>
<div class="b" style="left:1152.5px;top:408.0px;width:198px;height:24.5px;background:#f7f7f7"></div>
<div class="b" style="left:1352.5px;top:408.0px;width:128px;height:24.5px;background:#f7f7f7"></div>
<div class="b" style="left:1482.5px;top:408.0px;width:193.5px;height:24.5px;background:#f7f7f7"></div>
<svg class="b" style="left:1126.5px;top:408.4px;" width="25" height="24" viewBox="0 0 25 24"><rect x="0.5" y="0.5" width="23.5" height="22.8" rx="3" fill="#f6f6f6" stroke="#bdbdbd" stroke-width="1"/><g transform="translate(12.2,11.4) scale(0.85)"><path d="M-8.5 0C-6 -4.5 -3 -5.3 0 -5.3C3 -5.3 6 -4.5 8.5 0C6 4.5 3 5.3 0 5.3C-3 5.3 -6 4.5 -8.5 0Z" fill="#fff" stroke="#222" stroke-width="1.3"/><circle cx="0" cy="-0.3" r="3.7" fill="#1a1a1a"/><circle cx="0.9" cy="-1.4" r="1" fill="#ddd"/></g></svg>
<div class="b" style="left:1141px;top:619px;width:509px;height:12.7px;background:#d0d4d6"></div>
<svg class="b" style="left:1126px;top:620px;" width="10" height="11" viewBox="0 0 10 11"><path d="M2 5.5L7.5 2V9Z" fill="#6a6a6a"/></svg>
<svg class="b" style="left:1662px;top:620px;" width="10" height="11" viewBox="0 0 10 11"><path d="M8 5.5L2.5 2V9Z" fill="#6a6a6a"/></svg>
<div class="b" style="left:527.2px;top:1079.2px;width:682.5999999999999px;height:22.5px;background:#d6d9db;border-top-left-radius:2px;border-top-right-radius:3px"></div>
<div class="b" style="left:527.2px;top:1079.2px;width:58.799999999999955px;height:22.5px;background:#f2f2f2"></div>
<div class="b" style="left:585.5px;top:1080px;width:1px;height:21px;background:#c2c5c8"></div>
<div class="b" style="left:628.3px;top:1080px;width:1px;height:21px;background:#c2c5c8"></div>
<div class="b" style="left:628.8px;top:1079.2px;width:42.80000000000007px;height:22.5px;background:#ececec"></div>
<div class="b" style="left:671.1px;top:1080px;width:1px;height:21px;background:#c2c5c8"></div>
<div class="b" style="left:716.9px;top:1080px;width:1px;height:21px;background:#c2c5c8"></div>
<div class="b" style="left:784.0px;top:1080px;width:1px;height:21px;background:#c2c5c8"></div>
<div class="b" style="left:862.6px;top:1080px;width:1px;height:21px;background:#c2c5c8"></div>
<div class="b" style="left:941.8px;top:1080px;width:1px;height:21px;background:#c2c5c8"></div>
<div class="b" style="left:987.3px;top:1080px;width:1px;height:21px;background:#c2c5c8"></div>
<div class="b" style="left:1037.8px;top:1080px;width:1px;height:21px;background:#c2c5c8"></div>
<div class="b" style="left:1075.8px;top:1080px;width:1px;height:21px;background:#c2c5c8"></div>
<div class="b" style="left:1124.0px;top:1080px;width:1px;height:21px;background:#c2c5c8"></div>
<div class="b" style="left:1163.8px;top:1080px;width:1px;height:21px;background:#c2c5c8"></div>
<div class="b" style="left:1209.3px;top:1080px;width:1px;height:21px;background:#c2c5c8"></div>
<svg class="b" style="left:527px;top:1079px;" width="10" height="10" viewBox="0 0 10 10"><path d="M0.5 0.5H8L0.5 8Z" fill="#3d8fd0"/></svg>
<div class="b" style="left:384px;top:1101.3px;width:949.7px;height:46px;background:#f2f2f2;border-top-left-radius:4px;box-shadow:inset 1px 1px 0 #e2e2e2"></div>
<svg class="b" style="left:388px;top:1107px;" width="11" height="8" viewBox="0 0 11 8"><path d="M1.5 1.5L5.5 5.5L9.5 1.5" fill="none" stroke="#5a80a8" stroke-width="1.3"/></svg>
<div class="b" style="left:402.2px;top:1103px;width:1px;height:44px;background:#c8c8c8"></div>
<div class="b" style="left:462.8px;top:1106px;width:1px;height:37px;background:#cfcfcf"></div>
<div class="b" style="left:596.6px;top:1106px;width:1px;height:37px;background:#cfcfcf"></div>
<div class="b" style="left:654.4px;top:1106px;width:1px;height:37px;background:#cfcfcf"></div>
<div class="b" style="left:736.4px;top:1106px;width:1px;height:37px;background:#cfcfcf"></div>
<div class="b" style="left:1145.5px;top:1106px;width:1px;height:37px;background:#cfcfcf"></div>
<svg class="b" style="left:411px;top:1111px;" width="30" height="28" viewBox="0 0 30 28"><path d="M9 10C12 7 17 6.5 21 9C25 12 25.5 18 22 22C20 24.5 17 25.5 14.5 25.5" fill="none" stroke="#1d4a68" stroke-width="6.2"/><path d="M9 10C12 7 17 6.5 21 9C25 12 25.5 18 22 22C20 24.5 17 25.5 14.5 25.5" fill="none" stroke="#62aad2" stroke-width="4"/><path d="M2 2.5V14H13.5Z" fill="#62aad2" stroke="#1d4a68" stroke-width="1"/></svg>
<svg class="b" style="left:447.5px;top:1121.5px;" width="9" height="6" viewBox="0 0 9 6"><path d="M0.5 0.5H8.5L4.5 5Z" fill="#8c8c8c"/></svg>
<svg class="b" style="left:467px;top:1107px;" width="34" height="34" viewBox="0 0 34 34"><defs><filter id="glw" x="-30%" y="-30%" width="160%" height="160%"><feGaussianBlur stdDeviation="1.8"/></filter></defs><g filter="url(#glw)"><path d="M5.50 22.48 L16.93 29.08 L16.93 22.48 L11.22 19.18 L11.22 12.58 L5.50 9.28 Z" fill="#3aa0e0" stroke="#3aa0e0" stroke-width="3" stroke-linejoin="round"/><path d="M26.08 23.80 L16.93 29.08 L16.93 22.48 L26.08 17.20 Z" fill="#3aa0e0" stroke="#3aa0e0" stroke-width="3" stroke-linejoin="round"/><path d="M20.36 13.90 L11.22 19.18 L11.22 12.58 L20.36 7.30 Z" fill="#3aa0e0" stroke="#3aa0e0" stroke-width="3" stroke-linejoin="round"/><path d="M14.64 4.00 L20.36 7.30 L11.22 12.58 L5.50 9.28 Z" fill="#3aa0e0" stroke="#3aa0e0" stroke-width="3" stroke-linejoin="round"/><path d="M20.36 13.90 L26.08 17.20 L16.93 22.48 L11.22 19.18 Z" fill="#3aa0e0" stroke="#3aa0e0" stroke-width="3" stroke-linejoin="round"/></g><path d="M5.50 22.48 L16.93 29.08 L16.93 22.48 L11.22 19.18 L11.22 12.58 L5.50 9.28 Z" fill="#d8d8d8" stroke="#2a2a2a" stroke-width="1.1" stroke-linejoin="round"/><path d="M26.08 23.80 L16.93 29.08 L16.93 22.48 L26.08 17.20 Z" fill="#a8a8a8" stroke="#2a2a2a" stroke-width="1.1" stroke-linejoin="round"/><path d="M20.36 13.90 L11.22 19.18 L11.22 12.58 L20.36 7.30 Z" fill="#a8a8a8" stroke="#2a2a2a" stroke-width="1.1" stroke-linejoin="round"/><path d="M14.64 4.00 L20.36 7.30 L11.22 12.58 L5.50 9.28 Z" fill="#fbfbfb" stroke="#2a2a2a" stroke-width="1.1" stroke-linejoin="round"/><path d="M20.36 13.90 L26.08 17.20 L16.93 22.48 L11.22 19.18 Z" fill="#fbfbfb" stroke="#2a2a2a" stroke-width="1.1" stroke-linejoin="round"/></svg>
<svg class="b" style="left:505.5px;top:1121.5px;" width="9" height="6" viewBox="0 0 9 6"><path d="M0.5 0.5H8.5L4.5 5Z" fill="#8c8c8c"/></svg>
<svg class="b" style="left:524px;top:1108px;" width="28" height="31" viewBox="0 0 28 31"><path d="M2.00 20.30 L12.39 26.30 L12.39 20.30 L7.20 17.30 L7.20 11.30 L2.00 8.30 Z" fill="#dadada" stroke="#6a6a6a" stroke-width="1" stroke-linejoin="round"/><path d="M20.71 21.50 L12.39 26.30 L12.39 20.30 L20.71 15.50 Z" fill="#b4b4b4" stroke="#6a6a6a" stroke-width="1" stroke-linejoin="round"/><path d="M15.51 12.50 L7.20 17.30 L7.20 11.30 L15.51 6.50 Z" fill="#b4b4b4" stroke="#6a6a6a" stroke-width="1" stroke-linejoin="round"/><path d="M10.31 3.50 L15.51 6.50 L7.20 11.30 L2.00 8.30 Z" fill="#f6f6f6" stroke="#6a6a6a" stroke-width="1" stroke-linejoin="round"/><path d="M15.51 12.50 L20.71 15.50 L12.39 20.30 L7.20 17.30 Z" fill="#f6f6f6" stroke="#6a6a6a" stroke-width="1" stroke-linejoin="round"/><path d="M18.5 1V9" stroke="#1d6aa5" stroke-width="3"/><path d="M13.5 7.5H23.5L18.5 13Z" fill="#1d6aa5"/><path d="M2.5 25.5L12 30" stroke="#3a7ab8" stroke-width="2" stroke-dasharray="1.3 1.1"/></svg>
<svg class="b" style="left:562px;top:1108px;" width="28" height="30" viewBox="0 0 28 30"><defs><linearGradient id="rb2" gradientUnits="userSpaceOnUse" x1="0" y1="3" x2="3" y2="27"><stop offset="0" stop-color="#f01010"/><stop offset="0.35" stop-color="#f0e010"/><stop offset="0.65" stop-color="#20c020"/><stop offset="1" stop-color="#1040d0"/></linearGradient></defs><path d="M2.00 20.14 L12.91 26.44 L12.91 20.14 L7.46 16.99 L7.46 10.69 L2.00 7.54 Z" fill="url(#rb2)" stroke="#1a1a1a" stroke-width="1.1" stroke-linejoin="round"/><path d="M21.64 21.40 L12.91 26.44 L12.91 20.14 L21.64 15.10 Z" fill="url(#rb2)" stroke="#1a1a1a" stroke-width="1.1" stroke-linejoin="round"/><path d="M16.19 11.95 L7.46 16.99 L7.46 10.69 L16.19 5.65 Z" fill="url(#rb2)" stroke="#1a1a1a" stroke-width="1.1" stroke-linejoin="round"/><path d="M10.73 2.50 L16.19 5.65 L7.46 10.69 L2.00 7.54 Z" fill="url(#rb2)" stroke="#1a1a1a" stroke-width="1.1" stroke-linejoin="round"/><path d="M16.19 11.95 L21.64 15.10 L12.91 20.14 L7.46 16.99 Z" fill="url(#rb2)" stroke="#1a1a1a" stroke-width="1.1" stroke-linejoin="round"/></svg>
<svg class="b" style="left:603px;top:1110px;" width="30" height="28" viewBox="0 0 30 28"><rect x="1" y="1" width="28" height="26" fill="#fff" stroke="#444" stroke-width="1.2"/><rect x="1.6" y="1.6" width="26.8" height="4" fill="#4e93bb"/><path d="M5 10H9M11 10H25M5 14.5H9M11 14.5H25M5 19H9M11 19H25M5 23.5H9M11 23.5H25" stroke="#1f6a9c" stroke-width="2.2"/></svg>
<svg class="b" style="left:639px;top:1121.5px;" width="9" height="6" viewBox="0 0 9 6"><path d="M0.5 0.5H8.5L4.5 5Z" fill="#8c8c8c"/></svg>
<svg class="b" style="left:662.5px;top:1110.5px;" width="27" height="27" viewBox="0 0 27 27"><g fill="url(#arrg)" stroke="#1d4a68" stroke-width="0.9" stroke-linejoin="round"><path d="M12 1V5.5C9 6 6.5 8.5 6 11.5H9L4.2 12.3H1.2V8C2 4 6 1.2 12 1Z" transform="translate(0,0)"/><path d="M15 1C19 1.2 24 4 25 9L26.5 11.5H19L21.3 9C20.5 7 18 5.8 15 5.5Z"/><path d="M26 15V19C25 23 21 25.8 15 26V21.5C18 21 20.5 18.5 21 15.5H26Z"/><path d="M12 26C8 25.8 3 23 2 18L0.8 15.5H8L5.7 18C6.5 20 9 21.2 12 21.5Z"/></g></svg>
<svg class="b" style="left:698px;top:1108px;" width="34" height="30" viewBox="0 0 34 30"><path d="M2 21L12 17L30 21L20 27Z" fill="#e6e6e6" stroke="#999" stroke-width="0.9"/><path d="M4 21.5L22 25.5M7 20L25 24M10 19L28 23M6 23L16 19M10 24L20 20M14 25L24 21" stroke="#a0a0a0" stroke-width="0.6"/><path d="M10 17V4L20 1L22 13" fill="#f0f0f0" stroke="#999" stroke-width="0.9"/><path d="M11 7L20 4M11 11L21 8M14 3V16M17 2V15" stroke="#aaa" stroke-width="0.6"/><path d="M13 12L18 17L31 4" fill="none" stroke="#1d4a68" stroke-width="5"/><path d="M13 12L18 17L31 4" fill="none" stroke="#4a9ccc" stroke-width="3.2"/></svg>
<svg class="b" style="left:745.5px;top:1110.5px;" width="28" height="27" viewBox="0 0 28 27"><rect x="0.7" y="0.7" width="26.6" height="25.2" fill="url(#wing)" stroke="#333" stroke-width="1.2"/><rect x="1.3" y="1.3" width="25.4" height="3.4" fill="#4e93bb"/><path d="M1 5H27" stroke="#333" stroke-width="0.7"/><path d="M8 11L14 8.5L20 11V19L14 22L8 19Z" fill="#4a98c4" stroke="#1e4a66" stroke-width="1"/><path d="M8 11L14 13.5L20 11M14 13.5V22M11 9.7L17 12.2M17 9.7L11 12.2M8 15L14 17.7L20 15M11 12.3V20.5M17 12.3V20.5" stroke="#1e4a66" stroke-width="0.8" fill="none"/></svg>
<svg class="b" style="left:784px;top:1110px;" width="30" height="29" viewBox="0 0 30 29"><path d="M4 25L14 10.5L26 3.5" fill="none" stroke="#2a7ab0" stroke-width="2.4"/><rect x="1.8" y="22.8" width="4.4" height="4.4" fill="#fff" stroke="#222" stroke-width="1"/><rect x="11.8" y="8.3" width="4.4" height="4.4" fill="#fff" stroke="#222" stroke-width="1"/><rect x="23.8" y="1.3" width="4.4" height="4.4" fill="#fff" stroke="#222" stroke-width="1"/></svg>
<svg class="b" style="left:822px;top:1111px;" width="28" height="28" viewBox="0 0 28 28"><path d="M1 5L11 2C17 3 20 8 23 15L26 23L16 26C14 18 10 11 4 10Z" fill="#3f8fb8" stroke="#1e4a66" stroke-width="1"/><path d="M4 7.5L14 4.5M7 11L17 8M11 15L20 12M14 19L22 16M15 23L24 20M6 4L12 11L15 25M11 3L17 10L20 24M7 10L13 5M11 14L18 8M14 19L20 12M16 23L22 16" stroke="#1e4a66" stroke-width="0.8" fill="none"/></svg>
<svg class="b" style="left:856px;top:1121.5px;" width="9" height="6" viewBox="0 0 9 6"><path d="M0.5 0.5H8.5L4.5 5Z" fill="#8c8c8c"/></svg>
<svg class="b" style="left:876px;top:1111px;" width="28" height="28" viewBox="0 0 28 28"><path d="M1 5L13 1.5C18 3 21 8 23 15L25 23L14 26C13 18 10 11 5 9Z" fill="#5aaed6" stroke="#1e4a66" stroke-width="1"/><path d="M3 7L15 3.5M7 12L19 8.5M10 17.5L21.5 14M12.5 22L23.5 18.5M5 2.7C9 6 11 12 13 24.5M9 2C13 5.5 16 12 18.5 24" stroke="#1e4a66" stroke-width="0.9" fill="none"/><path d="M14 26L25 23L27 25L16 27.5Z" fill="#bbb" opacity="0.5"/></svg>
<svg class="b" style="left:912px;top:1109px;" width="30" height="30" viewBox="0 0 30 30"><path d="M14.5 1L2 20L13 28L28 20Z" fill="#4d9cc8" stroke="#1e4a66" stroke-width="1"/><path d="M14.5 1L13 28M14.5 1L20 23M8 14L20 23L24 14M2 20L20 23L28 20" stroke="#1e4a66" stroke-width="0.8" fill="none"/><path d="M14.5 1L2 20L13 28Z" fill="#2f7ba5" opacity="0.6"/></svg>
<svg class="b" style="left:948px;top:1121.5px;" width="9" height="6" viewBox="0 0 9 6"><path d="M0.5 0.5H8.5L4.5 5Z" fill="#8c8c8c"/></svg>
<svg class="b" style="left:965px;top:1108px;" width="30" height="32" viewBox="0 0 30 32"><path d="M3 13L11 2L13 10Z" fill="#fff" stroke="#333" stroke-width="1.1"/><path d="M13 5C20 5 24 9 23 17" fill="none" stroke="#111" stroke-width="2.5"/><path d="M19 15.5H27L23 21Z" fill="#111"/><path d="M14 20L6 28L14 31L22 27Z" fill="#4d9cc8" stroke="#1e4a66" stroke-width="0.9"/></svg>
<svg class="b" style="left:1000px;top:1108px;" width="36" height="32" viewBox="0 0 36 32"><g transform="translate(2,3) scale(1.0)"><path d="M0 3L7 0L14 3V11L7 14L0 11Z" fill="#5eb0d8" stroke="#1e4a66" stroke-width="0.9"/><path d="M0 3L7 6L14 3M7 6V14M3.5 1.5L10.5 4.5M10.5 1.5L3.5 4.5M0 7L7 10L14 7M3.5 4.5V12.5M10.5 4.5V12.5" stroke="#1e4a66" stroke-width="0.7" fill="none"/></g><g transform="translate(17,2) scale(1.0)"><path d="M0 3L7 0L14 3V11L7 14L0 11Z" fill="#5eb0d8" stroke="#1e4a66" stroke-width="0.9"/><path d="M0 3L7 6L14 3M7 6V14M3.5 1.5L10.5 4.5M10.5 1.5L3.5 4.5M0 7L7 10L14 7M3.5 4.5V12.5M10.5 4.5V12.5" stroke="#1e4a66" stroke-width="0.7" fill="none"/></g><g transform="translate(8,12) scale(1.2)"><path d="M0 3L7 0L14 3V11L7 14L0 11Z" fill="#5eb0d8" stroke="#1e4a66" stroke-width="0.9"/><path d="M0 3L7 6L14 3M7 6V14M3.5 1.5L10.5 4.5M10.5 1.5L3.5 4.5M0 7L7 10L14 7M3.5 4.5V12.5M10.5 4.5V12.5" stroke="#1e4a66" stroke-width="0.7" fill="none"/></g></svg>
<svg class="b" style="left:1039.5px;top:1121.5px;" width="9" height="6" viewBox="0 0 9 6"><path d="M0.5 0.5H8.5L4.5 5Z" fill="#8c8c8c"/></svg>
<svg class="b" style="left:1056px;top:1108px;" width="30" height="31" viewBox="0 0 30 31"><path d="M1 5L12 1L24 4V18L13 22L1 18Z" fill="#fff" stroke="#333" stroke-width="1"/><path d="M1 5L13 9L24 4M13 9V22M7 3L18 7M18 2.5L7 7M1 11.5L13 15.5L24 11" stroke="#333" stroke-width="0.8" fill="none"/><path d="M13 9L27 6V26L13 30Z" fill="#5eb0d8" stroke="#1e4a66" stroke-width="1"/><path d="M20 7.5V28M13 19.5L27 16" stroke="#1e4a66" stroke-width="0.9"/></svg>
<svg class="b" style="left:1092.5px;top:1121.5px;" width="9" height="6" viewBox="0 0 9 6"><path d="M0.5 0.5H8.5L4.5 5Z" fill="#8c8c8c"/></svg>
<svg class="b" style="left:1110px;top:1110px;" width="30" height="28" viewBox="0 0 30 28"><rect x="1" y="1" width="27" height="26" fill="#fff" stroke="#333" stroke-width="1"/><rect x="1.5" y="1.5" width="26" height="25" fill="#e8e8e8"/><circle cx="14.5" cy="14" r="11" fill="#4d9cc8" stroke="#1e4a66" stroke-width="1.1"/><path d="M3.5 14H25.5M14.5 3V25M6.7 6.2L22.3 21.8M22.3 6.2L6.7 21.8" stroke="#1e3a50" stroke-width="0.9"/></svg>
<svg class="b" style="left:1152px;top:1110px;" width="30" height="30" viewBox="0 0 30 30"><path d="M2 9L9 3V23L2 29Z" fill="#bbb" stroke="#333" stroke-width="1"/><path d="M2 19L9 13" stroke="#333" stroke-width="0.8"/><path d="M8 14H15" stroke="#111" stroke-width="2.6"/><path d="M14 10.5L19 14.3L14 18Z" fill="#111"/><path d="M20 9L28 2V22L20 29Z" fill="#5eb0d8" stroke="#1e4a66" stroke-width="1"/><path d="M24 5.5V25.5M20 19L28 12" stroke="#1e4a66" stroke-width="0.8"/></svg>
<svg class="b" style="left:1188px;top:1121.5px;" width="9" height="6" viewBox="0 0 9 6"><path d="M0.5 0.5H8.5L4.5 5Z" fill="#8c8c8c"/></svg>
<svg class="b" style="left:1205px;top:1108px;" width="30" height="31" viewBox="0 0 30 31"><path d="M1 22L14 17L28 22L15 28Z" fill="#5eb0d8" stroke="#1e4a66" stroke-width="1"/><path d="M7.5 19.5L21.5 25M21 19.5L8 25" stroke="#1e4a66" stroke-width="0.8"/><path d="M14.5 22V6" stroke="#111" stroke-width="2.6"/><path d="M10.5 8L14.5 1.5L18.5 8Z" fill="#111"/></svg>
<svg class="b" style="left:1241px;top:1121.5px;" width="9" height="6" viewBox="0 0 9 6"><path d="M0.5 0.5H8.5L4.5 5Z" fill="#8c8c8c"/></svg>
<svg class="b" style="left:1258px;top:1109px;" width="30" height="30" viewBox="0 0 30 30"><rect x="1" y="1" width="24" height="23" fill="#5eb0d8" stroke="#1e4a66" stroke-width="1.1"/><path d="M7 1V24M13 1V24M19 1V24M1 6.7H25M1 12.5H25M1 18.2H25" stroke="#1e4a66" stroke-width="0.9"/><path d="M9 28L25 10" stroke="#1e4a66" stroke-width="4"/><path d="M9 28L25 10" stroke="#5eb0d8" stroke-width="2.4"/><path d="M8 11L27 28" stroke="#333" stroke-width="3"/><path d="M8 11L27 28" stroke="#ccc" stroke-width="1.4"/></svg>
<svg class="b" style="left:1296px;top:1108px;" width="31" height="32" viewBox="0 0 31 32"><path d="M2 7L15 1L29 6V24L16 31L2 25Z" fill="#cfe8f5" stroke="#1e4a66" stroke-width="1"/><path d="M2 7L16 13L29 6M16 13V31" stroke="#1e4a66" stroke-width="1" fill="none"/><path d="M16 13L29 6V24L16 31Z" fill="#4d9cc8"/><path d="M2 7L16 13V31L2 25Z" fill="#a8d4ec"/><path d="M9 10V28M2 16L16 22M22.5 9.5V27.5M16 22L29 15" stroke="#1e4a66" stroke-width="0.8"/><text x="4" y="19" font-size="6" font-family="Liberation Sans" fill="#1e4a66">1</text><text x="10" y="21" font-size="6" font-family="Liberation Sans" fill="#1e4a66">2</text><text x="23.5" y="18" font-size="7" font-weight="700" font-family="Liberation Sans" fill="#fff">6</text><text x="23.5" y="27" font-size="7" font-weight="700" font-family="Liberation Sans" fill="#fff">5</text></svg>
<div class="b" style="left:622px;top:1069px;width:58px;height:38px;box-sizing:border-box;border:3px solid #1ea848"></div>
<div class="b" style="left:861px;top:1100px;width:51px;height:42px;box-sizing:border-box;border:3px solid #1ea848"></div>
<div class="b" style="left:993px;top:1100px;width:64px;height:42px;box-sizing:border-box;border:3px solid #1ea848"></div>
<svg class="b" style="left:8px;top:6px;" width="18" height="18" viewBox="0 0 18 18"><defs><radialGradient id="tig" cx="0.4" cy="0.35" r="0.7"><stop offset="0" stop-color="#4a90c8"/><stop offset="1" stop-color="#0a2a50"/></radialGradient></defs><circle cx="9" cy="9" r="8" fill="url(#tig)"/><path d="M7.5 6L11.5 8.8L7.5 11.6Z" fill="none" stroke="#fff" stroke-width="0.9"/><circle cx="9" cy="2.8" r="0.8" fill="#cde"/><circle cx="3.5" cy="9" r="0.8" fill="#cde"/><circle cx="14.5" cy="9" r="0.8" fill="#cde"/><rect x="7.8" y="13.8" width="2.4" height="1.4" fill="#cde"/></svg>
<div class="b" style="left:1597px;top:15px;width:10px;height:1px;background:#000"></div>
<div class="b" style="left:1642px;top:10px;width:10px;height:10px;box-sizing:border-box;border:1px solid #000"></div>
<svg class="b" style="left:1687px;top:9px;" width="12" height="12" viewBox="0 0 12 12"><path d="M1 1L11 11M11 1L1 11" stroke="#000" stroke-width="1.1"/></svg>
<svg class="b" style="left:12px;top:34px;" width="40" height="36" viewBox="0 0 40 36"><g fill="none" stroke="#fff" stroke-linecap="round"><path d="M14.5 5.5C19 4.8 24 5 25.8 6.5C27.5 8.5 23 12.5 15.8 16.3" stroke-width="2.6"/><path d="M8 19.4C13 18.6 18.5 19 20.3 20.5C22 22.5 18 27 6 32.2C8 28 9.5 24.5 11.5 21" stroke-width="2.6"/><path d="M34.5 15.4C29.5 14.8 26 15.3 25.8 16.8C26 19 31 23.5 31 26.5C30.5 28.8 26 28.8 19 28.8" stroke-width="2.6"/></g></svg>
<div class="b" style="left:592px;top:38px;width:350px;height:31px;background:#fff;border-radius:3px"></div>
<svg class="b" style="left:914px;top:47px;" width="20" height="17" viewBox="0 0 20 17"><circle cx="7.3" cy="7" r="5" fill="none" stroke="#333" stroke-width="2"/><path d="M11 10.8L16.5 15.8" stroke="#333" stroke-width="2.6"/></svg>
<svg class="b" style="left:951px;top:41px;" width="26" height="25" viewBox="0 0 26 25"><path d="M3 2.5H11.5L22 13L13.5 21.5L3 11Z" fill="none" stroke="#fff" stroke-width="2" stroke-linejoin="round"/><circle cx="7.3" cy="6.8" r="1.5" fill="#fff"/></svg>
<div class="b" style="left:262.5px;top:46px;width:1.8px;height:17px;background:#fff"></div>
<div class="b" style="left:1462.6px;top:54px;width:1.6px;height:16px;background:#fff"></div>
<svg class="b" style="left:1525px;top:55px;" width="14" height="9" viewBox="0 0 14 9"><path d="M2 2.5L7 6.5L12 2.5" fill="none" stroke="#fff" stroke-width="2.2"/></svg>
<svg class="b" style="left:1548px;top:38px;" width="40" height="30" viewBox="0 0 40 30"><circle cx="14.5" cy="15.5" r="10" fill="none" stroke="#fff" stroke-width="2.2"/><circle cx="14.5" cy="12.5" r="3.6" fill="#fff"/><path d="M8.3 22.3C9 17.8 11.5 16.8 14.5 16.8C17.5 16.8 20 17.8 20.7 22.3Z" fill="#fff"/><circle cx="27.7" cy="7.5" r="6.6" fill="#b4b4b4"/><circle cx="27.7" cy="7.5" r="1.6" fill="#fff"/></svg>
<svg class="b" style="left:1594px;top:42px;" width="23" height="23" viewBox="0 0 23 23"><path d="M11.5 2V21M2 11.5H21" stroke="#fff" stroke-width="3.2"/></svg>
<svg class="b" style="left:1636px;top:41px;" width="28" height="24" viewBox="0 0 28 24"><path d="M3 22C3.5 14 8 9.5 17 9.5V5L25 11.5L17 18V13.5C10.5 13.5 6 16 3 22Z" fill="none" stroke="#fff" stroke-width="2" stroke-linejoin="round"/></svg>
<svg class="b" style="left:1681px;top:36px;" width="34" height="30" viewBox="0 0 34 30"><circle cx="13" cy="17.5" r="10" fill="none" stroke="#fff" stroke-width="2.2"/><path d="M9.6 14.5C9.6 12.2 11 11 13 11C15 11 16.5 12.3 16.5 14C16.5 16.5 13 16.5 13 19.3" fill="none" stroke="#fff" stroke-width="2.2"/><circle cx="13" cy="22.6" r="1.3" fill="#fff"/><rect x="17.3" y="2.9" width="13.4" height="13.4" rx="2" fill="#1ba5e0"/><path d="M24 5.5L28.3 13.3H19.7Z" fill="#fff"/><path d="M24 8.5V11" stroke="#1ba5e0" stroke-width="1.2"/></svg>
<div class="b" style="left:143px;top:102px;width:178px;height:3px;background:#3d87c8"></div>
<svg class="b" style="left:326px;top:83px;" width="14" height="14" viewBox="0 0 14 14"><path d="M7 1.5V12.5M1.5 7H12.5" stroke="#a0a0a0" stroke-width="1.6"/></svg>
<svg class="b" style="left:1681px;top:77px;" width="26" height="26" viewBox="0 0 26 26"><rect x="1.5" y="1.5" width="23" height="23" rx="2" fill="none" stroke="#1c4f7e" stroke-width="1.3"/><path d="M20 6L14.5 11.5M14.5 7V11.5H19M6 20L11.5 14.5M7 14.5H11.5V19" fill="none" stroke="#1c4f7e" stroke-width="2"/></svg>
<svg class="b" style="left:60px;top:30px;" width="78" height="76" viewBox="0 0 78 76"><defs><radialGradient id="cmpd" cx="0.5" cy="0.7" r="0.6"><stop offset="0" stop-color="#0e4a78"/><stop offset="1" stop-color="#07304f"/></radialGradient><linearGradient id="cmpg" x1="0" y1="0" x2="0" y2="1"><stop offset="0" stop-color="#a6d2ee"/><stop offset="0.55" stop-color="#7aa6c4"/><stop offset="1" stop-color="#4a7898"/></linearGradient></defs><circle cx="38.5" cy="37.5" r="36" fill="#0b5a8e"/><circle cx="38.5" cy="37.5" r="31.7" fill="url(#cmpd)"/><ellipse cx="38.4" cy="20.5" rx="23.3" ry="13.8" fill="url(#cmpg)" opacity="0.95"/><circle cx="38" cy="37" r="13.2" fill="#0c4c7c" stroke="#1a8ad0" stroke-width="1.4"/><path d="M33 31L45.5 37.5L33 44Z" fill="none" stroke="#fff" stroke-width="1.8" stroke-linejoin="round"/><path d="M24 18L30 23M53 18L47 23M24 58L30 52M53 58L47 52" stroke="#1a8ad0" stroke-width="1"/><text x="11" y="42" font-family="Liberation Sans" font-weight="700" font-size="10" fill="#fff">3D</text><text x="30.5" y="62.5" font-family="Liberation Sans" font-weight="700" font-size="9.5" fill="#fff">V.R</text><path d="M59.5 34V42M60.5 31L62 29" stroke="#fff" stroke-width="1.8"/><path d="M63 33L64.5 30" stroke="#fff" stroke-width="1"/><path d="M33.3 11.5L37.8 16.3L33.8 20.6M37.8 16.3L42.3 11.2M40.7 17.8L44.2 15.6M42.2 16.8L40.2 20.8" fill="none" stroke="#fff" stroke-width="1.9" stroke-linecap="round"/><circle cx="37.2" cy="11.3" r="1.3" fill="#fff"/></svg>
<svg class="b" style="left:1610px;top:965px;" width="80" height="60" viewBox="0 0 80 60"><defs><radialGradient id="trg" cx="0.5" cy="0.5" r="0.5"><stop offset="0" stop-color="#7a7a7a"/><stop offset="1" stop-color="#555" stop-opacity="0.2"/></radialGradient></defs><ellipse cx="37" cy="43" rx="26" ry="7" fill="url(#trg)" opacity="0.8"/><path d="M37 43V15A19 19 0 0 1 58.5 40Z" fill="#6e6e6e" opacity="0.75"/><path d="M38.5 18A18 18 0 0 1 58 40" fill="none" stroke="#9a9a9a" stroke-width="0.8"/><path d="M37 43V17" stroke="#a8a8a8" stroke-width="2.4"/><path d="M34.5 18L37 11L39.5 18Z" fill="#c8c8c8"/><path d="M37 43L60 45" stroke="#a8a8a8" stroke-width="2"/><path d="M59 42.5L66 45.5L59 47.5Z" fill="#c8c8c8"/><path d="M37 43L31 49" stroke="#a8a8a8" stroke-width="1.6"/><circle cx="37" cy="43" r="2.8" fill="#fff"/><text x="34.5" y="10" font-size="5.5" font-family="Liberation Sans" fill="#ddd">Y</text><text x="67.5" y="47.5" font-size="5.5" font-family="Liberation Sans" fill="#cde">X</text><text x="24.5" y="55" font-size="5.5" font-family="Liberation Sans" fill="#ddd">Z</text></svg>
<svg class="b" style="left:1696px;top:1054px;" width="20" height="20" viewBox="0 0 20 20"><defs><linearGradient id="cng" x1="0" y1="0" x2="1" y2="1"><stop offset="0" stop-color="#ddd"/><stop offset="1" stop-color="#444"/></linearGradient></defs><path d="M1 14L16.5 1.5L12.5 17Z" fill="url(#cng)"/></svg>
<div class="b" style="left:0px;top:0px;width:1px;height:1147px;background:#6f6f6f"></div>
<div class="b" style="left:1716px;top:0px;width:1px;height:1147px;background:#6f6f6f"></div>
<div class="b" style="left:0px;top:1146px;width:1717px;height:1px;background:#6f6f6f"></div>
<div class="t" style="left:39.60px;top:131.70px;font-size:13.00px;color:#f2f2f2;font-weight:400;font-style:normal;font-family:'Liberation Sans',sans-serif;letter-spacing:0.034px;">CanCrush</div>
<div class="t" style="left:58.80px;top:158.36px;font-size:13.00px;color:#ffffff;font-weight:400;font-style:normal;font-family:'Liberation Sans',sans-serif;letter-spacing:0.316px;">Model</div>
<div class="t" style="left:77.50px;top:185.02px;font-size:13.00px;color:#f2f2f2;font-weight:400;font-style:normal;font-family:'Liberation Sans',sans-serif;letter-spacing:-0.026px;">CanCrush_Assy A.1</div>
<div class="t" style="left:96.60px;top:211.68px;font-size:13.00px;color:#ffffff;font-weight:400;font-style:normal;font-family:'Liberation Sans',sans-serif;letter-spacing:-0.403px;">FEM_Rep A.1</div>
<div class="t" style="left:96.40px;top:238.34px;font-size:13.00px;color:#f2f2f2;font-weight:400;font-style:normal;font-family:'Liberation Sans',sans-serif;width:250.6px;overflow:hidden;padding-bottom:5px;letter-spacing:0.05px;">Can A.1 (OZ_rp_can_solid_var-10_FOR DROP)</div>
<div class="t" style="left:96.40px;top:265.00px;font-size:13.00px;color:#f2f2f2;font-weight:400;font-style:normal;font-family:'Liberation Sans',sans-serif;width:250.6px;overflow:hidden;padding-bottom:5px;letter-spacing:0.3px;">MovingPlate A.1 (OZ_rp_top_Default.stp&lt;1&gt;)</div>
<div class="t" style="left:96.40px;top:291.66px;font-size:13.00px;color:#f2f2f2;font-weight:400;font-style:normal;font-family:'Liberation Sans',sans-serif;width:250.6px;overflow:hidden;padding-bottom:5px;letter-spacing:0.063px;">FixedPlate A.1 (OZ_rp_base_Default.stp&lt;1&gt;)</div>
<div class="t" style="left:58.30px;top:318.32px;font-size:13.00px;color:#f2f2f2;font-weight:400;font-style:normal;font-family:'Liberation Sans',sans-serif;letter-spacing:-0.152px;">Scenario</div>
<div class="t" style="left:77.60px;top:344.08px;font-size:13.00px;color:#f2f2f2;font-weight:400;font-style:normal;font-family:'Liberation Sans',sans-serif;letter-spacing:0.021px;">CanCrush</div>
<div class="t" style="left:58.30px;top:371.64px;font-size:13.00px;color:#f2f2f2;font-weight:400;font-style:normal;font-family:'Liberation Sans',sans-serif;letter-spacing:-0.060px;">Result</div>
<div class="t" style="left:1109.30px;top:150.14px;font-size:12.00px;color:#2a2a2a;font-weight:400;font-style:normal;font-family:'Liberation Sans',sans-serif;letter-spacing:-0.204px;">Feature Manager</div>
<div class="t" style="left:1136.00px;top:189.57px;font-size:11.50px;color:#3a3a3a;font-weight:400;font-style:normal;font-family:'Liberation Sans',sans-serif;letter-spacing:-0.610px;">CanCrush</div>
<div class="t" style="left:1279.30px;top:189.57px;font-size:11.50px;color:#3a3a3a;font-weight:400;font-style:normal;font-family:'Liberation Sans',sans-serif;letter-spacing:-0.438px;">No Procedures Exist</div>
<div class="t" style="left:1561.00px;top:216.17px;font-size:11.50px;color:#5a5045;font-weight:400;font-style:normal;font-family:'Liberation Sans',sans-serif;letter-spacing:0.119px;">Viewing all 5</div>
<div class="t" style="left:1131.20px;top:281.77px;font-size:11.50px;color:#556a86;font-weight:400;font-style:normal;font-family:'Liberation Sans',sans-serif;">Vi</div>
<div class="t" style="left:1160.20px;top:281.77px;font-size:11.50px;color:#556a86;font-weight:400;font-style:normal;font-family:'Liberation Sans',sans-serif;letter-spacing:-0.297px;">Name</div>
<div class="t" style="left:1360.20px;top:281.77px;font-size:11.50px;color:#556a86;font-weight:400;font-style:normal;font-family:'Liberation Sans',sans-serif;letter-spacing:0.016px;">Type</div>
<div class="t" style="left:1490.20px;top:281.77px;font-size:11.50px;color:#556a86;font-weight:400;font-style:normal;font-family:'Liberation Sans',sans-serif;letter-spacing:0.255px;">Definition</div>
<div class="t" style="left:1158.10px;top:311.97px;font-size:11.50px;color:#333;font-weight:400;font-style:normal;font-family:'Liberation Sans',sans-serif;letter-spacing:-0.178px;">Can_Mesh</div>
<div class="t" style="left:1357.90px;top:311.97px;font-size:11.50px;color:#333;font-weight:400;font-style:normal;font-family:'Liberation Sans',sans-serif;letter-spacing:0.083px;">Surface Quad Mesh</div>
<div class="t" style="left:1158.10px;top:337.97px;font-size:11.50px;color:#333;font-weight:400;font-style:normal;font-family:'Liberation Sans',sans-serif;letter-spacing:-0.318px;">FEM_Rep A.1</div>
<div class="t" style="left:1357.90px;top:337.97px;font-size:11.50px;color:#333;font-weight:400;font-style:normal;font-family:'Liberation Sans',sans-serif;letter-spacing:0.133px;">Finite Element Model</div>
<div class="t" style="left:1158.10px;top:363.97px;font-size:11.50px;color:#333;font-weight:400;font-style:normal;font-family:'Liberation Sans',sans-serif;letter-spacing:-0.077px;">FixedPlate_Mesh</div>
<div class="t" style="left:1357.90px;top:363.97px;font-size:11.50px;color:#333;font-weight:400;font-style:normal;font-family:'Liberation Sans',sans-serif;letter-spacing:0.214px;">Partition Hex Mesh</div>
<div class="t" style="left:1158.10px;top:389.97px;font-size:11.50px;color:#333;font-weight:400;font-style:normal;font-family:'Liberation Sans',sans-serif;letter-spacing:0.174px;">MovingPlate_Mesh</div>
<div class="t" style="left:1357.90px;top:389.97px;font-size:11.50px;color:#333;font-weight:400;font-style:normal;font-family:'Liberation Sans',sans-serif;letter-spacing:0.214px;">Partition Hex Mesh</div>
<div class="t" style="left:1158.10px;top:415.97px;font-size:11.50px;color:#333;font-weight:400;font-style:normal;font-family:'Liberation Sans',sans-serif;letter-spacing:0.091px;">Surface Quad Mesh.3</div>
<div class="t" style="left:1357.90px;top:415.97px;font-size:11.50px;color:#333;font-weight:400;font-style:normal;font-family:'Liberation Sans',sans-serif;letter-spacing:0.083px;">Surface Quad Mesh</div>
<div class="t" style="left:533.20px;top:1085.81px;font-size:11.80px;color:#333;font-weight:400;font-style:normal;font-family:'Liberation Sans',sans-serif;letter-spacing:-0.211px;">Standard</div>
<div class="t" style="left:592.50px;top:1085.81px;font-size:11.80px;color:#333;font-weight:400;font-style:normal;font-family:'Liberation Sans',sans-serif;letter-spacing:0.031px;">Setup</div>
<div class="t" style="left:636.50px;top:1085.81px;font-size:11.80px;color:#333;font-weight:400;font-style:normal;font-family:'Liberation Sans',sans-serif;letter-spacing:-0.340px;">Mesh</div>
<div class="t" style="left:679.20px;top:1085.81px;font-size:11.80px;color:#333;font-weight:400;font-style:normal;font-family:'Liberation Sans',sans-serif;letter-spacing:-0.459px;">Group</div>
<div class="t" style="left:724.30px;top:1085.81px;font-size:11.80px;color:#333;font-weight:400;font-style:normal;font-family:'Liberation Sans',sans-serif;letter-spacing:-0.028px;">Properties</div>
<div class="t" style="left:791.00px;top:1085.81px;font-size:11.80px;color:#333;font-weight:400;font-style:normal;font-family:'Liberation Sans',sans-serif;letter-spacing:0.057px;">Abstractions</div>
<div class="t" style="left:870.20px;top:1085.81px;font-size:11.80px;color:#333;font-weight:400;font-style:normal;font-family:'Liberation Sans',sans-serif;letter-spacing:0.001px;">Connections</div>
<div class="t" style="left:948.90px;top:1085.81px;font-size:11.80px;color:#333;font-weight:400;font-style:normal;font-family:'Liberation Sans',sans-serif;letter-spacing:-0.191px;">Check</div>
<div class="t" style="left:994.00px;top:1085.81px;font-size:11.80px;color:#333;font-weight:400;font-style:normal;font-family:'Liberation Sans',sans-serif;letter-spacing:-0.170px;">Display</div>
<div class="t" style="left:1044.80px;top:1085.81px;font-size:11.80px;color:#333;font-weight:400;font-style:normal;font-family:'Liberation Sans',sans-serif;letter-spacing:-0.090px;">View</div>
<div class="t" style="left:1082.60px;top:1085.81px;font-size:11.80px;color:#333;font-weight:400;font-style:normal;font-family:'Liberation Sans',sans-serif;letter-spacing:-0.444px;">AR-VR</div>
<div class="t" style="left:1131.00px;top:1085.81px;font-size:11.80px;color:#333;font-weight:400;font-style:normal;font-family:'Liberation Sans',sans-serif;letter-spacing:-0.209px;">Tools</div>
<div class="t" style="left:1171.10px;top:1085.81px;font-size:11.80px;color:#333;font-weight:400;font-style:normal;font-family:'Liberation Sans',sans-serif;letter-spacing:0.103px;">Touch</div>
<div class="t" style="left:30.30px;top:10.39px;font-size:12.30px;color:#000;font-weight:400;font-style:normal;font-family:'Liberation Sans',sans-serif;transform-origin:0 0;transform:scaleX(0.8263);">3DEXPERIENCE</div>
<div class="t" style="left:601.30px;top:48.52px;font-size:12.50px;color:#9a9a9a;font-weight:400;font-style:normal;font-family:'Liberation Sans',sans-serif;letter-spacing:-0.085px;">Search</div>
<div class="t" style="left:145.80px;top:46.40px;font-size:15.00px;color:#fff;font-weight:700;font-style:normal;font-family:'Liberation Sans',sans-serif;letter-spacing:0.206px;">3D</div>
<div class="t" style="left:166.80px;top:46.40px;font-size:15.00px;color:#fff;font-weight:400;font-style:normal;font-family:'Liberation Sans',sans-serif;letter-spacing:-0.770px;">EXPERIENCE</div>
<div class="t" style="left:271.00px;top:46.40px;font-size:15.00px;color:#fff;font-weight:700;font-style:normal;font-family:'Liberation Sans',sans-serif;letter-spacing:0.075px;">SIMULIA</div>
<div class="t" style="left:339.70px;top:46.83px;font-size:14.50px;color:#e6eef5;font-weight:400;font-style:normal;font-family:'Liberation Sans',sans-serif;letter-spacing:-0.165px;">Structural Model Creation</div>
<div class="t" style="left:1458.30px;top:38.68px;font-size:10.30px;color:#a9c3db;font-weight:400;font-style:normal;font-family:'Liberation Sans',sans-serif;letter-spacing:0.392px;">Bjorn Wallen</div>
<div class="t" style="left:1314.60px;top:53.78px;font-size:15.50px;color:#fff;font-weight:400;font-style:normal;font-family:'Liberation Sans',sans-serif;letter-spacing:0.018px;">SolidEngineer Demo</div>
<div class="t" style="left:1470.00px;top:53.78px;font-size:15.50px;color:#fff;font-weight:400;font-style:normal;font-family:'Liberation Sans',sans-serif;letter-spacing:0.096px;">Simulia</div>
<div class="t" style="left:202.00px;top:82.15px;font-size:14.00px;color:#5b5550;font-weight:700;font-style:italic;font-family:'Liberation Sans',sans-serif;letter-spacing:-0.613px;">CanCrush</div>
</body></html>
